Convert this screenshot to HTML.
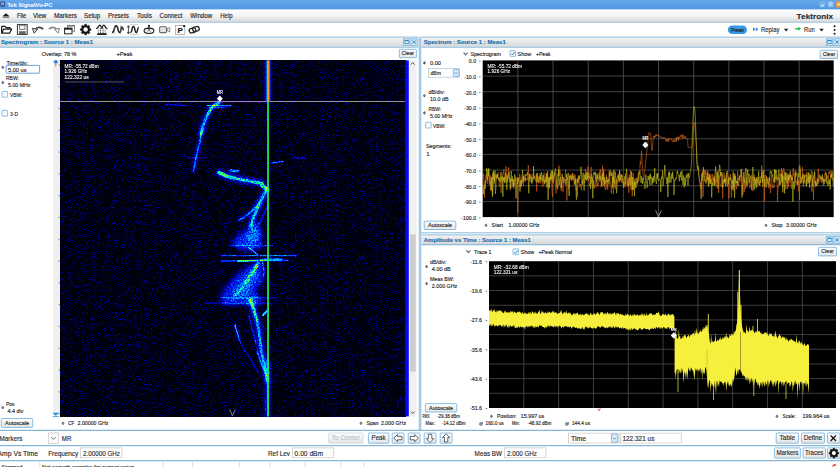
<!DOCTYPE html>
<html><head><meta charset="utf-8"><title>Tek SignalVu-PC</title>
<style>html,body{margin:0;padding:0;background:#fff;overflow:hidden}svg{display:block;font-family:"Liberation Sans",sans-serif}</style></head>
<body>
<svg width="840" height="467" viewBox="0 0 840 467">

<defs>
<linearGradient id="gTitle" x1="0" y1="0" x2="0" y2="1"><stop offset="0" stop-color="#66a8ea"/><stop offset="1" stop-color="#4f96e0"/></linearGradient>
<linearGradient id="gMenu" x1="0" y1="0" x2="0" y2="1"><stop offset="0" stop-color="#ffffff"/><stop offset="0.5" stop-color="#f4f4f4"/><stop offset="1" stop-color="#d9d9d9"/></linearGradient>
<linearGradient id="gPanel" x1="0" y1="0" x2="0" y2="1"><stop offset="0" stop-color="#f3f3f3"/><stop offset="1" stop-color="#d6d8da"/></linearGradient>
<linearGradient id="gHot" x1="0" y1="0" x2="1" y2="0"><stop offset="0" stop-color="#0030ff" stop-opacity="0"/><stop offset="0.25" stop-color="#00a0ff" stop-opacity="0.55"/><stop offset="0.37" stop-color="#30f070" stop-opacity="0.95"/><stop offset="0.45" stop-color="#f59a10"/><stop offset="0.57" stop-color="#f59a10"/><stop offset="0.66" stop-color="#30f070" stop-opacity="0.95"/><stop offset="0.78" stop-color="#00a0ff" stop-opacity="0.5"/><stop offset="1" stop-color="#0030ff" stop-opacity="0"/></linearGradient>
<linearGradient id="gBtn" x1="0" y1="0" x2="0" y2="1"><stop offset="0" stop-color="#ffffff"/><stop offset="1" stop-color="#e4e4e4"/></linearGradient>
<filter id="sg" filterUnits="userSpaceOnUse" x="60" y="60.4" width="345.3" height="356.1" color-interpolation-filters="sRGB">
<feTurbulence type="fractalNoise" baseFrequency="1.37 1.43" numOctaves="1" seed="3" result="n"/>
<feColorMatrix in="n" type="matrix" values="0.8 0 0 0 -0.44  0.8 0 0 0 -0.44  0.8 0 0 0 -0.44  0 0 0 0 1" result="ng"/>
<feTurbulence type="fractalNoise" baseFrequency="0.6" numOctaves="1" seed="12" result="n2"/>
<feColorMatrix in="n2" type="matrix" values="0 1 0 0 0  0 1 0 0 0  0 1 0 0 0  0 0 0 0 1" result="n2g"/>
<feComposite in="SourceGraphic" in2="n2g" operator="arithmetic" k1="1.6" k2="0.1" k3="0" k4="0" result="fg"/>
<feComposite in="fg" in2="ng" operator="arithmetic" k1="0" k2="1" k3="1" k4="0" result="sum"/>
<feGaussianBlur in="sum" stdDeviation="0.55" result="sb"/>
<feComponentTransfer in="sb">
<feFuncR type="table" tableValues="0 0 0 0 0 0.35 1 1 1"/>
<feFuncG type="table" tableValues="0 0 0.12 0.62 1 1 1 0.45 0"/>
<feFuncB type="table" tableValues="0.03 0.6 1 1 0.75 0.2 0 0 0"/>
<feFuncA type="identity"/>
</feComponentTransfer>
</filter>
<filter id="b1" filterUnits="userSpaceOnUse" x="60" y="60" width="346" height="357"><feGaussianBlur stdDeviation="0.6"/></filter>
<filter id="b2" filterUnits="userSpaceOnUse" x="60" y="60" width="346" height="357"><feGaussianBlur stdDeviation="1.5"/></filter>
<filter id="b2m" filterUnits="userSpaceOnUse" x="60" y="60" width="346" height="357"><feGaussianBlur stdDeviation="2.2"/></filter>
<filter id="b3" filterUnits="userSpaceOnUse" x="60" y="60" width="346" height="357"><feGaussianBlur stdDeviation="3"/></filter>
<filter id="b4" filterUnits="userSpaceOnUse" x="0" y="0" width="420" height="467"><feGaussianBlur stdDeviation="30"/></filter>
<filter id="soft"><feGaussianBlur stdDeviation="0.35"/></filter>
</defs>
<rect x="0" y="0" width="840" height="467" fill="#ffffff" />
<rect x="0" y="0" width="840" height="9.5" fill="url(#gTitle)" />
<text x="7.5" y="6.8" font-size="6.0" fill="#ffffff" stroke="#ffffff" stroke-width="0.13" font-weight="bold" textLength="45" lengthAdjust="spacingAndGlyphs" opacity="0.9" >Tek SignalVu-PC</text>
<rect x="0.3" y="1.4" width="4.8" height="5.4" fill="#2f4f8a" rx="0.8"/>
<rect x="1.2" y="2.3" width="3" height="3" fill="#7fa3d4" />
<rect x="819.3" y="1.3" width="6.2" height="6.3" fill="#79b2ec" rx="1.3"/>
<rect x="827.5" y="1.3" width="6.2" height="6.3" fill="#79b2ec" rx="1.3"/>
<rect x="836" y="1.3" width="5" height="6.3" fill="#f29a3c" rx="1.3"/>
<rect x="821" y="5" width="2.8" height="1.2" fill="#e8f2fc" />
<rect x="829.6" y="2.8" width="2.4" height="2.4" fill="none" stroke="#e8f2fc" stroke-width="0.7"/>
<rect x="837.6" y="3.6" width="2.6" height="1.6" fill="#fde8d0" />
<rect x="0" y="9.5" width="840" height="12.5" fill="url(#gMenu)" />
<line x1="0" y1="9.6" x2="840" y2="9.6" stroke="#b5d3f2" stroke-width="0.7" />
<line x1="0" y1="22.3" x2="840" y2="22.3" stroke="#9cc3e6" stroke-width="1" />
<path d="M2.8 15.9 L6 13.2 L9.2 15.9 Z M2.8 16.5 H9.2 V17.6 H2.8 Z" fill="#1c1c1c"/>
<text x="17" y="18.4" font-size="6.4" fill="#222" stroke="#222" stroke-width="0.13" textLength="9.3" lengthAdjust="spacingAndGlyphs" >File</text>
<text x="33" y="18.4" font-size="6.4" fill="#222" stroke="#222" stroke-width="0.13" textLength="13.3" lengthAdjust="spacingAndGlyphs" >View</text>
<text x="54" y="18.4" font-size="6.4" fill="#222" stroke="#222" stroke-width="0.13" textLength="23" lengthAdjust="spacingAndGlyphs" >Markers</text>
<text x="84" y="18.4" font-size="6.4" fill="#222" stroke="#222" stroke-width="0.13" textLength="16.3" lengthAdjust="spacingAndGlyphs" >Setup</text>
<text x="108" y="18.4" font-size="6.4" fill="#222" stroke="#222" stroke-width="0.13" textLength="20.8" lengthAdjust="spacingAndGlyphs" >Presets</text>
<text x="137" y="18.4" font-size="6.4" fill="#222" stroke="#222" stroke-width="0.13" textLength="14.8" lengthAdjust="spacingAndGlyphs" >Tools</text>
<text x="159.6" y="18.4" font-size="6.4" fill="#222" stroke="#222" stroke-width="0.13" textLength="23.0" lengthAdjust="spacingAndGlyphs" >Connect</text>
<text x="190.2" y="18.4" font-size="6.4" fill="#222" stroke="#222" stroke-width="0.13" textLength="22.0" lengthAdjust="spacingAndGlyphs" >Window</text>
<text x="220.3" y="18.4" font-size="6.4" fill="#222" stroke="#222" stroke-width="0.13" textLength="12.3" lengthAdjust="spacingAndGlyphs" >Help</text>
<text x="796.6" y="18.5" font-size="7.7" fill="#2a2a33" stroke="#2a2a33" stroke-width="0.13" font-weight="bold" textLength="36.6" lengthAdjust="spacingAndGlyphs" >Tektronix</text>
<path d="M808.4 18.4 l1.5 -3.6" stroke="#20b8d0" stroke-width="1" fill="none"/>
<rect x="0" y="23" width="840" height="13" fill="#ffffff" />
<path d="M1.6 33.2 V26.4 H5 L6.2 27.6 H10 V29.2 M1.6 33.2 L3.6 29.2 H11.6 L9.6 33.2 Z" fill="#fff" stroke="#1c1c1c" stroke-width="1.2" stroke-linejoin="round"/>
<rect x="17.4" y="24.6" width="9.8" height="9.8" fill="#fff" stroke="#333" stroke-width="1"/>
<rect x="19.6" y="25.2" width="5.4" height="4.2" fill="#f2f2f2" stroke="#555" stroke-width="0.7"/>
<rect x="19.4" y="31.6" width="5.8" height="2.6" fill="#666" stroke="#444" stroke-width="0.5"/>
<path d="M34.5 31 C35.5 27.2 40.5 26 43.2 29.2" fill="none" stroke="#444" stroke-width="1.6"/>
<path d="M32.4 28.3 L37.6 29.3 L34.1 33.2 Z" fill="#ddd" stroke="#444" stroke-width="1" stroke-linejoin="round"/>
<path d="M57.6 31 C56.6 27.2 51.6 26 48.9 29.2" fill="none" stroke="#8a8a8a" stroke-width="1.6"/>
<path d="M59.7 28.3 L54.5 29.3 L58 33.2 Z" fill="#eee" stroke="#8a8a8a" stroke-width="1" stroke-linejoin="round"/>
<rect x="67.6" y="25.4" width="7" height="5.8" fill="#fff" stroke="#777" stroke-width="0.9"/><rect x="67.6" y="25.2" width="7" height="1.4" fill="#777"/>
<rect x="64.6" y="28.2" width="7.4" height="5.6" fill="#fff" stroke="#222" stroke-width="1"/><rect x="64.4" y="27.9" width="7.8" height="1.8" fill="#222"/>
<path d="M90.83 28.73 L90.83 30.47 L89.72 30.59 L89.22 31.82 L89.91 32.68 L88.68 33.91 L87.82 33.22 L86.59 33.72 L86.47 34.83 L84.73 34.83 L84.61 33.72 L83.38 33.22 L82.52 33.91 L81.29 32.68 L81.98 31.82 L81.48 30.59 L80.37 30.47 L80.37 28.73 L81.48 28.61 L81.98 27.38 L81.29 26.52 L82.52 25.29 L83.38 25.98 L84.61 25.48 L84.73 24.37 L86.47 24.37 L86.59 25.48 L87.82 25.98 L88.68 25.29 L89.91 26.52 L89.22 27.38 L89.72 28.61 Z" fill="#111" stroke="#111" stroke-width="0.5" stroke-linejoin="round"/><circle cx="85.6" cy="29.6" r="2.23" fill="#fff"/>
<path d="M96.2 28.6 C97.6 28.6 98 27.6 98.6 26.4 C99.2 25.2 99.8 24.8 100.4 25.4 C101.2 26.2 101.2 28.2 101.8 28.2 C102.4 28.2 102.4 26.2 103.2 25.4 C103.8 24.8 104.4 25.2 105 26.4 C105.6 27.6 106 28.6 107.4 28.6" fill="none" stroke="#1c1c1c" stroke-width="1.25"/>
<path d="M100.4 28.2 V33 M103 28.2 V33" stroke="#333" stroke-width="0.9" stroke-dasharray="1.3 0.5"/><path d="M98.4 29.4 V33 M105.2 29.4 V33" stroke="#666" stroke-width="0.6"/>
<rect x="97.2" y="33.2" width="9.4" height="1.8" fill="#1c1c1c"/>
<path d="M112 32.4 C114.6 32.6 114 25.8 116.2 25.8 C118.2 25.8 117.8 32.6 119.6 32.6 C121.2 32.6 120.6 27 122 27 C123 27 123 29 123.4 30.2" fill="none" stroke="#1c1c1c" stroke-width="1.5"/>
<path d="M114.3 25 V34.4 M120.7 25 V34.4" stroke="#777" stroke-width="0.5"/>
<path d="M130 24.8 H138.4 M130 34.4 H138.4" stroke="#999" stroke-width="0.5"/>
<path d="M128.4 26 V33.4 M127.3 27.4 L128.4 25.6 L129.5 27.4 M127.3 32 L128.4 33.8 L129.5 32" fill="none" stroke="#1c1c1c" stroke-width="0.8"/>
<path d="M130.4 32.6 C132.4 32.6 131.6 26.6 133.4 26.6 C135.2 26.6 134.6 32.6 136.2 32.6 C137.8 32.6 137.2 27.4 138.8 27.6" fill="none" stroke="#1c1c1c" stroke-width="1.45"/>
<ellipse cx="149" cy="30.8" rx="4.9" ry="2.7" fill="#fff" stroke="#1c1c1c" stroke-width="1.1"/>
<ellipse cx="149" cy="31" rx="2.2" ry="1" fill="none" stroke="#777" stroke-width="0.5"/>
<path d="M149 26 V30.4" stroke="#1c1c1c" stroke-width="1.1"/><circle cx="149" cy="25.8" r="1.1" fill="#1c1c1c"/>
<rect x="159.6" y="26.8" width="6.9" height="5.8" rx="1" fill="#e6e6e6" stroke="#6a6a6a" stroke-width="1.1"/>
<path d="M167.2 28.8 L169.8 27.4 V32 L167.2 30.6 Z" fill="#f4f4f4" stroke="#777" stroke-width="0.8" stroke-linejoin="round"/>
<rect x="175.6" y="25.5" width="9.2" height="8.9" fill="#fff" stroke="#999" stroke-width="0.7"/>
<text x="177.6" y="33.3" font-size="8" fill="#111" stroke="#111" stroke-width="0.13" font-weight="bold" >P</text>
<circle cx="184.1" cy="26.1" r="1.15" fill="#111"/>
<rect x="189.2" y="28.2" width="6.6" height="4.4" rx="2" fill="none" stroke="#2a2a2a" stroke-width="1.35" transform="rotate(-14 192.5 30.4)"/>
<rect x="192.6" y="26.8" width="6.6" height="4.4" rx="2" fill="none" stroke="#2a2a2a" stroke-width="1.35" transform="rotate(-14 195.9 29)"/>
<rect x="727.8" y="25.4" width="19.2" height="8.6" rx="4.3" fill="#3d97de"/>
<text x="731" y="31.7" font-size="5.36" fill="#0c1824" stroke="#0c1824" stroke-width="0.13" textLength="12.8" lengthAdjust="spacingAndGlyphs" >Preset</text>
<path d="M753 27.2 l2.4 2 l-2.4 2 z M755.8 27.2 l2.6 2 l-2.6 2 z" fill="#2f8fe0"/>
<text x="761" y="31.7" font-size="7.27" fill="#2a2a2a" stroke="#2a2a2a" stroke-width="0.13" textLength="18.4" lengthAdjust="spacingAndGlyphs" >Replay</text>
<path d="M783.8 28.8 h4.6 l-2.3 2.6 z" fill="#222"/>
<path d="M795.2 28.1 h3.2 v-1.3 l2.6 2 l-2.6 2 v-1.3 h-3.2 z" fill="#22c040"/>
<text x="804" y="31.7" font-size="7.27" fill="#2a2a2a" stroke="#2a2a2a" stroke-width="0.13" textLength="10.6" lengthAdjust="spacingAndGlyphs" >Run</text>
<path d="M819.2 28.8 h4.6 l-2.3 2.6 z" fill="#222"/>
<circle cx="834.6" cy="26.3" r="1.05" fill="#1a1a1a"/><circle cx="834.6" cy="30" r="1.05" fill="#1a1a1a"/><circle cx="834.6" cy="33.7" r="1.05" fill="#1a1a1a"/>
<rect x="0" y="37.5" width="418.6" height="9.299999999999997" fill="url(#gPanel)" />
<line x1="0" y1="37.1" x2="418.6" y2="37.1" stroke="#8ebbdc" stroke-width="1.0" />
<line x1="0" y1="47.199999999999996" x2="418.6" y2="47.199999999999996" stroke="#8ebbdc" stroke-width="1.1" />
<text x="1" y="44.1" font-size="6.0" fill="#1270ae" stroke="#1270ae" stroke-width="0.13" font-weight="bold" textLength="92" lengthAdjust="spacingAndGlyphs" >Spectrogram : Source 1 : Meas1</text>
<rect x="403.4" y="38.800000000000004" width="6.4" height="6.6" fill="#cfe6f7" stroke="#6fb0dd" stroke-width="0.7"/>
<rect x="405.0" y="40.400000000000006" width="3.2" height="3.2" fill="#ffffff" stroke="#2f86c4" stroke-width="0.8"/>
<line x1="404.79999999999995" y1="40.6" x2="408.4" y2="40.6" stroke="#2f86c4" stroke-width="1.2" />
<rect x="411.0" y="38.800000000000004" width="6.4" height="6.6" fill="#cfe6f7" stroke="#6fb0dd" stroke-width="0.7"/>
<path d="M412.7 40.5 l3 3.2 M415.7 40.5 l-3 3.2" stroke="#2f86c4" stroke-width="1" fill="none"/>
<rect x="421.4" y="37.5" width="418.6" height="9.299999999999997" fill="url(#gPanel)" />
<line x1="421.4" y1="37.1" x2="840" y2="37.1" stroke="#8ebbdc" stroke-width="1.0" />
<line x1="421.4" y1="47.199999999999996" x2="840" y2="47.199999999999996" stroke="#8ebbdc" stroke-width="1.1" />
<text x="423.79999999999995" y="44.1" font-size="6.0" fill="#1270ae" stroke="#1270ae" stroke-width="0.13" font-weight="bold" textLength="82" lengthAdjust="spacingAndGlyphs" >Spectrum : Source 1 : Meas1</text>
<rect x="826.3" y="38.800000000000004" width="6.4" height="6.6" fill="#cfe6f7" stroke="#6fb0dd" stroke-width="0.7"/>
<rect x="827.9" y="40.400000000000006" width="3.2" height="3.2" fill="#ffffff" stroke="#2f86c4" stroke-width="0.8"/>
<line x1="827.6999999999999" y1="40.6" x2="831.3" y2="40.6" stroke="#2f86c4" stroke-width="1.2" />
<rect x="833.9" y="38.800000000000004" width="6.4" height="6.6" fill="#cfe6f7" stroke="#6fb0dd" stroke-width="0.7"/>
<path d="M835.5999999999999 40.5 l3 3.2 M838.5999999999999 40.5 l-3 3.2" stroke="#2f86c4" stroke-width="1" fill="none"/>
<rect x="421.4" y="235.3" width="418.6" height="8.899999999999977" fill="url(#gPanel)" />
<line x1="421.4" y1="234.9" x2="840" y2="234.9" stroke="#8ebbdc" stroke-width="1.0" />
<line x1="421.4" y1="244.6" x2="840" y2="244.6" stroke="#8ebbdc" stroke-width="1.1" />
<text x="423.79999999999995" y="241.7" font-size="6.0" fill="#1270ae" stroke="#1270ae" stroke-width="0.13" font-weight="bold" textLength="107" lengthAdjust="spacingAndGlyphs" >Amplitude vs Time : Source 1 : Meas1</text>
<rect x="826.3" y="236.6" width="6.4" height="6.6" fill="#cfe6f7" stroke="#6fb0dd" stroke-width="0.7"/>
<rect x="827.9" y="238.2" width="3.2" height="3.2" fill="#ffffff" stroke="#2f86c4" stroke-width="0.8"/>
<line x1="827.6999999999999" y1="238.4" x2="831.3" y2="238.4" stroke="#2f86c4" stroke-width="1.2" />
<rect x="833.9" y="236.6" width="6.4" height="6.6" fill="#cfe6f7" stroke="#6fb0dd" stroke-width="0.7"/>
<path d="M835.5999999999999 238.3 l3 3.2 M838.5999999999999 238.3 l-3 3.2" stroke="#2f86c4" stroke-width="1" fill="none"/>
<rect x="418.6" y="37" width="2.8" height="393.5" fill="#b9d5ea" />
<rect x="419.7" y="37" width="0.9" height="393.5" fill="#8ebbdc" />
<line x1="421.4" y1="232.8" x2="840" y2="232.8" stroke="#8ebbdc" stroke-width="1.0" />
<text x="41.8" y="55.6" font-size="5.45" fill="#1e1e1e" stroke="#1e1e1e" stroke-width="0.13" textLength="34.5" lengthAdjust="spacingAndGlyphs" >Overlap: 78 %</text>
<text x="116.5" y="55.6" font-size="5.19" fill="#1e1e1e" stroke="#1e1e1e" stroke-width="0.13" textLength="16" lengthAdjust="spacingAndGlyphs" >+Peak</text>
<rect x="399.3" y="49.3" width="17.1" height="8.4" fill="url(#gBtn)" stroke="#6faedb" stroke-width="0.8" rx="0.8"/>
<text x="407.85" y="55.376" font-size="5.36" fill="#1e1e1e" stroke="#1e1e1e" stroke-width="0.13" text-anchor="middle" textLength="12.5" lengthAdjust="spacingAndGlyphs">Clear</text>
<text x="6.5" y="64.6" font-size="5.45" fill="#1e1e1e" stroke="#1e1e1e" stroke-width="0.13" textLength="21.5" lengthAdjust="spacingAndGlyphs" >Time/div:</text>
<rect x="6.2" y="65.4" width="33.4" height="7.8" fill="#ffffff" stroke="#5b9bd5" stroke-width="0.9" rx="0.5"/>
<text x="8" y="71.7" font-size="5.45" fill="#1e1e1e" stroke="#1e1e1e" stroke-width="0.13" textLength="18.5" lengthAdjust="spacingAndGlyphs" >5.00 us</text>
<path d="M1.1 67.4 L2.8 65.4 L4.5 67.4 Z" fill="#6b6478"/><path d="M1.3 67.5 H4.3 L2.8 69.0 Z" fill="#4a4a52"/>
<text x="6" y="80" font-size="5.45" fill="#1e1e1e" stroke="#1e1e1e" stroke-width="0.13" textLength="13" lengthAdjust="spacingAndGlyphs" >RBW:</text>
<text x="8" y="87.4" font-size="5.45" fill="#1e1e1e" stroke="#1e1e1e" stroke-width="0.13" textLength="22.5" lengthAdjust="spacingAndGlyphs" >5.00 MHz</text>
<path d="M1.1 82.7 L2.8 80.7 L4.5 82.7 Z" fill="#6b6478"/><path d="M1.3 82.8 H4.3 L2.8 84.3 Z" fill="#4a4a52"/>
<rect x="2" y="91.4" width="5.6" height="5.8" fill="#f4f9fd" stroke="#6faedb" stroke-width="0.8" rx="0.6"/>
<text x="10" y="96.7" font-size="5.45" fill="#1e1e1e" stroke="#1e1e1e" stroke-width="0.13" textLength="12.5" lengthAdjust="spacingAndGlyphs" >VBW:</text>
<rect x="2" y="110.4" width="5.6" height="5.8" fill="#f4f9fd" stroke="#6faedb" stroke-width="0.8" rx="0.6"/>
<text x="10" y="115.7" font-size="5.45" fill="#1e1e1e" stroke="#1e1e1e" stroke-width="0.13" textLength="8" lengthAdjust="spacingAndGlyphs" >3-D</text>
<text x="6" y="406.4" font-size="5.45" fill="#1e1e1e" stroke="#1e1e1e" stroke-width="0.13" textLength="8.5" lengthAdjust="spacingAndGlyphs" >Pos</text>
<text x="7.5" y="413.2" font-size="5.45" fill="#1e1e1e" stroke="#1e1e1e" stroke-width="0.13" textLength="16" lengthAdjust="spacingAndGlyphs" >4.4 div</text>
<path d="M1.1 407.7 L2.8 405.7 L4.5 407.7 Z" fill="#6b6478"/><path d="M1.3 407.8 H4.3 L2.8 409.3 Z" fill="#4a4a52"/>
<rect x="1.3" y="418.5" width="31.4" height="8.9" fill="url(#gBtn)" stroke="#6faedb" stroke-width="0.8" rx="0.8"/>
<text x="17.0" y="424.82599999999996" font-size="5.36" fill="#1e1e1e" stroke="#1e1e1e" stroke-width="0.13" text-anchor="middle" textLength="24" lengthAdjust="spacingAndGlyphs">Autoscale</text>
<path d="M61.3 423.4 L63 421.4 L64.7 423.4 Z" fill="#6b6478"/><path d="M61.5 423.5 H64.5 L63 425.0 Z" fill="#4a4a52"/>
<text x="68" y="425" font-size="5.28" fill="#1e1e1e" stroke="#1e1e1e" stroke-width="0.13" textLength="6.5" lengthAdjust="spacingAndGlyphs" >CF</text>
<text x="77.5" y="425" font-size="5.28" fill="#1e1e1e" stroke="#1e1e1e" stroke-width="0.13" textLength="31" lengthAdjust="spacingAndGlyphs" >2.00000 GHz</text>
<path d="M359.3 423.4 L361 421.4 L362.7 423.4 Z" fill="#6b6478"/><path d="M359.5 423.5 H362.5 L361 425.0 Z" fill="#4a4a52"/>
<text x="366.5" y="425" font-size="5.28" fill="#1e1e1e" stroke="#1e1e1e" stroke-width="0.13" textLength="12" lengthAdjust="spacingAndGlyphs" >Span</text>
<text x="381" y="425" font-size="5.28" fill="#1e1e1e" stroke="#1e1e1e" stroke-width="0.13" textLength="25" lengthAdjust="spacingAndGlyphs" >2.000 GHz</text>
<rect x="53" y="60" width="7" height="356.5" fill="#efefef" />
<line x1="58.6" y1="64.9" x2="60" y2="64.9" stroke="#555" stroke-width="0.7" />
<line x1="58.6" y1="86.7" x2="60" y2="86.7" stroke="#555" stroke-width="0.7" />
<line x1="58.6" y1="108.5" x2="60" y2="108.5" stroke="#555" stroke-width="0.7" />
<line x1="58.6" y1="130.3" x2="60" y2="130.3" stroke="#555" stroke-width="0.7" />
<line x1="58.6" y1="152.10000000000002" x2="60" y2="152.10000000000002" stroke="#555" stroke-width="0.7" />
<line x1="58.6" y1="173.9" x2="60" y2="173.9" stroke="#555" stroke-width="0.7" />
<line x1="58.6" y1="195.70000000000002" x2="60" y2="195.70000000000002" stroke="#555" stroke-width="0.7" />
<line x1="58.6" y1="217.5" x2="60" y2="217.5" stroke="#555" stroke-width="0.7" />
<line x1="58.6" y1="239.3" x2="60" y2="239.3" stroke="#555" stroke-width="0.7" />
<line x1="58.6" y1="261.1" x2="60" y2="261.1" stroke="#555" stroke-width="0.7" />
<line x1="58.6" y1="282.9" x2="60" y2="282.9" stroke="#555" stroke-width="0.7" />
<line x1="58.6" y1="304.70000000000005" x2="60" y2="304.70000000000005" stroke="#555" stroke-width="0.7" />
<line x1="58.6" y1="326.5" x2="60" y2="326.5" stroke="#555" stroke-width="0.7" />
<line x1="58.6" y1="348.30000000000007" x2="60" y2="348.30000000000007" stroke="#555" stroke-width="0.7" />
<line x1="58.6" y1="370.1" x2="60" y2="370.1" stroke="#555" stroke-width="0.7" />
<line x1="58.6" y1="391.9" x2="60" y2="391.9" stroke="#555" stroke-width="0.7" />
<line x1="58.6" y1="413.70000000000005" x2="60" y2="413.70000000000005" stroke="#555" stroke-width="0.7" />
<path d="M53.2 61.4 h5.2 l-1.3 1.9 h-2.6 z M54.4 60.2 h2.8 v1.3 h-2.8 z" fill="#2a7de1"/><path d="M55.8 63 v3.4" stroke="#d33" stroke-width="0.8"/>
<path d="M52.4 412.7 h6.6 l-3.3 3.1 z M52.8 416.1 h5.8 v0.7 h-5.8 z" fill="#1e8cf5"/>
<g filter="url(#sg)"><rect x="60" y="60.4" width="345.3" height="356.1" fill="#000"/><polyline points="219,102.5 214,105.5 210,110.5 206,118 203,126 201,134" fill="none" stroke="#fff" stroke-width="6" stroke-linecap="round" stroke-linejoin="round" opacity="0.2" filter="url(#b2)"/>
<polyline points="201.5,132 200,140 198,149 196,158 194.5,165 193.5,171" fill="none" stroke="#fff" stroke-width="4" stroke-linecap="round" stroke-linejoin="round" opacity="0.16" filter="url(#b2)"/>
<polyline points="219,102.5 214,105.5 210,110.5 206,118 203,126 201,134" fill="none" stroke="#fff" stroke-width="2.8" stroke-linecap="round" stroke-linejoin="round" opacity="0.25" filter="url(#b1)"/>
<polyline points="201.5,132 200,140 198,149 196,158 194.5,165 193.5,171" fill="none" stroke="#fff" stroke-width="1.5" stroke-linecap="round" stroke-linejoin="round" opacity="0.26" filter="url(#b1)"/>
<polyline points="219.5,103 214,105.2 211,108.5 208,114" fill="none" stroke="#fff" stroke-width="2.4" stroke-linecap="round" stroke-linejoin="round" opacity="0.14" filter="url(#b1)"/>
<polyline points="207,105.5 231,105.8" fill="none" stroke="#fff" stroke-width="1.2" stroke-linecap="round" stroke-linejoin="round" opacity="0.42" filter="url(#b1)"/>
<polyline points="209,107.7 226,107.8" fill="none" stroke="#fff" stroke-width="1.0" stroke-linecap="round" stroke-linejoin="round" opacity="0.3" filter="url(#b1)"/>
<polyline points="165,104.3 187,105.6" fill="none" stroke="#fff" stroke-width="1.4" stroke-linecap="round" stroke-linejoin="round" opacity="0.2" filter="url(#b1)"/>
<polyline points="186,158 208,157.7" fill="none" stroke="#fff" stroke-width="1.2" stroke-linecap="round" stroke-linejoin="round" opacity="0.13" filter="url(#b1)"/>
<polyline points="271,162.9 283,161.6" fill="none" stroke="#fff" stroke-width="1.3" stroke-linecap="round" stroke-linejoin="round" opacity="0.36" filter="url(#b1)"/>
<polyline points="294,157.4 306,158.4" fill="none" stroke="#fff" stroke-width="1.3" stroke-linecap="round" stroke-linejoin="round" opacity="0.22" filter="url(#b1)"/>
<polyline points="219,172.5 226,176 240,179.5 255,182 262,183.5" fill="none" stroke="#fff" stroke-width="7" stroke-linecap="round" stroke-linejoin="round" opacity="0.2" filter="url(#b2)"/>
<polyline points="219,172.5 226,176 240,179.5 255,182 262,183.5" fill="none" stroke="#fff" stroke-width="3.2" stroke-linecap="round" stroke-linejoin="round" opacity="0.34" filter="url(#b1)"/>
<polyline points="219,172.5 227,176" fill="none" stroke="#fff" stroke-width="3.4" stroke-linecap="round" stroke-linejoin="round" opacity="0.28" filter="url(#b1)"/>
<polyline points="230.5,170.4 238,171.4" fill="none" stroke="#fff" stroke-width="2.6" stroke-linecap="round" stroke-linejoin="round" opacity="0.4" filter="url(#b1)"/>
<polyline points="262,185.5 268,190" fill="none" stroke="#fff" stroke-width="3.6" stroke-linecap="round" stroke-linejoin="round" opacity="0.45" filter="url(#b1)"/>
<polyline points="265.5,187 268,189.5" fill="none" stroke="#fff" stroke-width="2.2" stroke-linecap="round" stroke-linejoin="round" opacity="0.4" filter="url(#b1)"/>
<polyline points="266,191 262,198 258,207 254,216 251,226" fill="none" stroke="#fff" stroke-width="7" stroke-linecap="round" stroke-linejoin="round" opacity="0.2" filter="url(#b2)"/>
<polyline points="266,191 262,198 258,207 254,216 251,226" fill="none" stroke="#fff" stroke-width="2.8" stroke-linecap="round" stroke-linejoin="round" opacity="0.3" filter="url(#b1)"/>
<polyline points="260,203 252,211 243,218 239,220" fill="none" stroke="#fff" stroke-width="4" stroke-linecap="round" stroke-linejoin="round" opacity="0.14" filter="url(#b2)"/>
<polyline points="260,203 252,211 243,218 239,220" fill="none" stroke="#fff" stroke-width="1.6" stroke-linecap="round" stroke-linejoin="round" opacity="0.24" filter="url(#b1)"/>
<polyline points="268,205 264,214 259,224" fill="none" stroke="#fff" stroke-width="2.0" stroke-linecap="round" stroke-linejoin="round" opacity="0.2" filter="url(#b1)"/>
<polygon points="258,221 262,232 262,248 250,251 238,249 231,243 239,234 251,226" fill="#fff" opacity="0.24" filter="url(#b2m)"/>
<polygon points="255,226 259,232 256,243 247,244 246,236" fill="#fff" opacity="0.14" filter="url(#b2)"/>
<polygon points="252,263 263,262 263,282 255,290 262,299 262,305 223,305 220,298 227,285 239,273" fill="#fff" opacity="0.23" filter="url(#b2m)"/>
<polygon points="250,270 258,272 252,286 246,296 232,300 234,290 242,280" fill="#fff" opacity="0.13" filter="url(#b2)"/>
<polyline points="230,245.7 272.5,245.7" fill="none" stroke="#fff" stroke-width="0.9" stroke-linecap="round" stroke-linejoin="round" opacity="0.28" filter="url(#b1)"/>
<polyline points="221,255.6 297,255.6" fill="none" stroke="#fff" stroke-width="1.1" stroke-linecap="round" stroke-linejoin="round" opacity="0.28" filter="url(#b1)"/>
<polyline points="248,255.6 287,255.6" fill="none" stroke="#fff" stroke-width="0.9" stroke-linecap="round" stroke-linejoin="round" opacity="0.18" filter="url(#b1)"/>
<polyline points="221,261 288,260.5" fill="none" stroke="#fff" stroke-width="1.3" stroke-linecap="round" stroke-linejoin="round" opacity="0.34" filter="url(#b1)"/>
<polyline points="238,261.3 282,259" fill="none" stroke="#fff" stroke-width="1.9" stroke-linecap="round" stroke-linejoin="round" opacity="0.4" filter="url(#b1)"/>
<polyline points="243,261 250,260.6" fill="none" stroke="#fff" stroke-width="1.4" stroke-linecap="round" stroke-linejoin="round" opacity="0.2" filter="url(#b1)"/>
<polyline points="262,258.8 272,258" fill="none" stroke="#fff" stroke-width="1.2" stroke-linecap="round" stroke-linejoin="round" opacity="0.22" filter="url(#b1)"/>
<polyline points="248.8,247.4 253,251 257.3,254.5" fill="none" stroke="#fff" stroke-width="1.4" stroke-linecap="round" stroke-linejoin="round" opacity="0.4" filter="url(#b1)"/>
<polyline points="258,263 255,268 251,275 246,282" fill="none" stroke="#fff" stroke-width="3.4" stroke-linecap="round" stroke-linejoin="round" opacity="0.25" filter="url(#b1)"/>
<polyline points="257.5,264 254.5,270 252,274.5" fill="none" stroke="#fff" stroke-width="2.4" stroke-linecap="round" stroke-linejoin="round" opacity="0.3" filter="url(#b1)"/>
<polyline points="257.2,265.8 255.6,268.2" fill="none" stroke="#fff" stroke-width="2.4" stroke-linecap="round" stroke-linejoin="round" opacity="0.5" filter="url(#b1)"/>
<polyline points="262.6,262 264,270 263.6,276.5" fill="none" stroke="#fff" stroke-width="1.1" stroke-linecap="round" stroke-linejoin="round" opacity="0.4" filter="url(#b1)"/>
<polyline points="246,283 241,289 236,295" fill="none" stroke="#fff" stroke-width="2.6" stroke-linecap="round" stroke-linejoin="round" opacity="0.2" filter="url(#b1)"/>
<polyline points="220,297.7 276,297.7" fill="none" stroke="#fff" stroke-width="0.9" stroke-linecap="round" stroke-linejoin="round" opacity="0.26" filter="url(#b1)"/>
<polyline points="205,303.2 271,303.2" fill="none" stroke="#fff" stroke-width="0.9" stroke-linecap="round" stroke-linejoin="round" opacity="0.22" filter="url(#b1)"/>
<polyline points="250,300 253,308 256,318 259,330 260,342 262,355 265,368 267.5,380" fill="none" stroke="#fff" stroke-width="7" stroke-linecap="round" stroke-linejoin="round" opacity="0.2" filter="url(#b2)"/>
<polyline points="250,300 253,308 256,318 259,330 260,342 262,355 265,368 267.5,380" fill="none" stroke="#fff" stroke-width="2.6" stroke-linecap="round" stroke-linejoin="round" opacity="0.26" filter="url(#b1)"/>
<polyline points="251,300 254,309 257,320" fill="none" stroke="#fff" stroke-width="2.6" stroke-linecap="round" stroke-linejoin="round" opacity="0.26" filter="url(#b1)"/>
<polyline points="268,310 263,315" fill="none" stroke="#fff" stroke-width="1.8" stroke-linecap="round" stroke-linejoin="round" opacity="0.5" filter="url(#b1)"/>
<polyline points="235,325 237,332 239,339" fill="none" stroke="#fff" stroke-width="3" stroke-linecap="round" stroke-linejoin="round" opacity="0.12" filter="url(#b2)"/>
<polyline points="235,325 237,332 239,339" fill="none" stroke="#fff" stroke-width="1.2" stroke-linecap="round" stroke-linejoin="round" opacity="0.4" filter="url(#b1)"/>
<polyline points="239,339 244,349 251,360 258,372" fill="none" stroke="#fff" stroke-width="1.6" stroke-linecap="round" stroke-linejoin="round" opacity="0.16" filter="url(#b1)"/>
<polyline points="249,316 252,328 256,344" fill="none" stroke="#fff" stroke-width="1.6" stroke-linecap="round" stroke-linejoin="round" opacity="0.22" filter="url(#b1)"/>
<polyline points="257,352 262,365 267.5,378" fill="none" stroke="#fff" stroke-width="1.6" stroke-linecap="round" stroke-linejoin="round" opacity="0.3" filter="url(#b1)"/>
<polyline points="267.5,362 267.5,416" fill="none" stroke="#fff" stroke-width="5.5" stroke-linecap="round" stroke-linejoin="round" opacity="0.2" filter="url(#b2)"/>
<polyline points="268,60.4 268,101" fill="none" stroke="#fff" stroke-width="4" stroke-linecap="round" stroke-linejoin="round" opacity="0.1" filter="url(#b2)"/>
<rect x="264" y="60" width="8" height="41" fill="#fff" opacity="0.1" filter="url(#b2)"/></g>
<rect x="60" y="101.15" width="345.3" height="0.85" fill="#b0b0b0"/>
<rect x="218" y="101" width="50" height="1.1" fill="#b070d0" opacity="0.6"/>
<rect x="267.2" y="102" width="1.7" height="314.5" fill="#24f05a"/>
<rect x="265" y="60.4" width="6.2" height="40.8" fill="url(#gHot)"/>
<path d="M219.8 95.6 l3 3.1 l-3 3.1 l-3 -3.1 z" fill="#ffffff"/>
<text x="216.8" y="94.4" font-size="4.5" fill="#ffffff" stroke="#ffffff" stroke-width="0.13" textLength="6.2" lengthAdjust="spacingAndGlyphs" opacity="0.99" >MR</text>
<path d="M229.8 409.5 l2.7 6.5 l2.7 -6.5" stroke="#9a9a9a" stroke-width="0.8" fill="none"/>
<rect x="63.6" y="62.6" width="36.4" height="17.6" fill="#000008" opacity="0.85" filter="url(#b1)"/>
<text x="64.6" y="67.8" font-size="5.1" fill="#f4f4f4" stroke="#f4f4f4" stroke-width="0.13" textLength="34" lengthAdjust="spacingAndGlyphs" opacity="0.99" >MR: -55.72 dBm</text>
<text x="64.6" y="73.2" font-size="5.1" fill="#f4f4f4" stroke="#f4f4f4" stroke-width="0.13" textLength="22.5" lengthAdjust="spacingAndGlyphs" opacity="0.99" >1.926 GHz</text>
<text x="64.6" y="78.7" font-size="5.1" fill="#f4f4f4" stroke="#f4f4f4" stroke-width="0.13" textLength="24" lengthAdjust="spacingAndGlyphs" opacity="0.99" >122.322 us</text>
<rect x="65" y="80.9" width="59" height="2" fill="#8088a0" opacity="0.3" filter="url(#b1)"/>
<rect x="405.2" y="60.4" width="3.7" height="356" fill="#0606ff" />
<rect x="408.9" y="60.4" width="7.6" height="356.1" fill="#f0f0f0" />
<rect x="410" y="234.4" width="5.8" height="137.2" fill="#cdcdcd" />
<path d="M410.8 64.6 l1.9 -2 l1.9 2" stroke="#444" stroke-width="0.9" fill="none"/>
<path d="M410.8 411.5 l1.9 2 l1.9 -2" stroke="#444" stroke-width="0.9" fill="none"/>
<rect x="482.7" y="60.4" width="351.00000000000006" height="156.7" fill="#000000" />
<line x1="517.87" y1="60.4" x2="517.87" y2="217.1" stroke="#606060" stroke-width="0.7"/>
<line x1="482.7" y1="76.07" x2="833.7" y2="76.07" stroke="#606060" stroke-width="0.7"/>
<line x1="553.04" y1="60.4" x2="553.04" y2="217.1" stroke="#606060" stroke-width="0.7"/>
<line x1="482.7" y1="91.74" x2="833.7" y2="91.74" stroke="#606060" stroke-width="0.7"/>
<line x1="588.21" y1="60.4" x2="588.21" y2="217.1" stroke="#606060" stroke-width="0.7"/>
<line x1="482.7" y1="107.41" x2="833.7" y2="107.41" stroke="#606060" stroke-width="0.7"/>
<line x1="623.38" y1="60.4" x2="623.38" y2="217.1" stroke="#606060" stroke-width="0.7"/>
<line x1="482.7" y1="123.08" x2="833.7" y2="123.08" stroke="#606060" stroke-width="0.7"/>
<line x1="658.55" y1="60.4" x2="658.55" y2="217.1" stroke="#606060" stroke-width="0.7"/>
<line x1="482.7" y1="138.75" x2="833.7" y2="138.75" stroke="#606060" stroke-width="0.7"/>
<line x1="693.72" y1="60.4" x2="693.72" y2="217.1" stroke="#606060" stroke-width="0.7"/>
<line x1="482.7" y1="154.42" x2="833.7" y2="154.42" stroke="#606060" stroke-width="0.7"/>
<line x1="728.89" y1="60.4" x2="728.89" y2="217.1" stroke="#606060" stroke-width="0.7"/>
<line x1="482.7" y1="170.09" x2="833.7" y2="170.09" stroke="#606060" stroke-width="0.7"/>
<line x1="764.06" y1="60.4" x2="764.06" y2="217.1" stroke="#606060" stroke-width="0.7"/>
<line x1="482.7" y1="185.76" x2="833.7" y2="185.76" stroke="#606060" stroke-width="0.7"/>
<line x1="799.23" y1="60.4" x2="799.23" y2="217.1" stroke="#606060" stroke-width="0.7"/>
<line x1="482.7" y1="201.43" x2="833.7" y2="201.43" stroke="#606060" stroke-width="0.7"/>
<text x="476.2" y="63.4" font-size="5.28" fill="#1e1e1e" stroke="#1e1e1e" stroke-width="0.13" text-anchor="end" >0.0</text>
<line x1="479.1" y1="61.2" x2="480.5" y2="61.2" stroke="#444" stroke-width="0.7"/>
<text x="476.2" y="79.1" font-size="5.28" fill="#1e1e1e" stroke="#1e1e1e" stroke-width="0.13" text-anchor="end" >-10.0</text>
<line x1="479.1" y1="76.9" x2="480.5" y2="76.9" stroke="#444" stroke-width="0.7"/>
<text x="476.2" y="94.7" font-size="5.28" fill="#1e1e1e" stroke="#1e1e1e" stroke-width="0.13" text-anchor="end" >-20.0</text>
<line x1="479.1" y1="92.5" x2="480.5" y2="92.5" stroke="#444" stroke-width="0.7"/>
<text x="476.2" y="110.4" font-size="5.28" fill="#1e1e1e" stroke="#1e1e1e" stroke-width="0.13" text-anchor="end" >-30.0</text>
<line x1="479.1" y1="108.2" x2="480.5" y2="108.2" stroke="#444" stroke-width="0.7"/>
<text x="476.2" y="126.1" font-size="5.28" fill="#1e1e1e" stroke="#1e1e1e" stroke-width="0.13" text-anchor="end" >-40.0</text>
<line x1="479.1" y1="123.9" x2="480.5" y2="123.9" stroke="#444" stroke-width="0.7"/>
<text x="476.2" y="141.8" font-size="5.28" fill="#1e1e1e" stroke="#1e1e1e" stroke-width="0.13" text-anchor="end" >-50.0</text>
<line x1="479.1" y1="139.6" x2="480.5" y2="139.6" stroke="#444" stroke-width="0.7"/>
<text x="476.2" y="157.4" font-size="5.28" fill="#1e1e1e" stroke="#1e1e1e" stroke-width="0.13" text-anchor="end" >-60.0</text>
<line x1="479.1" y1="155.2" x2="480.5" y2="155.2" stroke="#444" stroke-width="0.7"/>
<text x="476.2" y="173.1" font-size="5.28" fill="#1e1e1e" stroke="#1e1e1e" stroke-width="0.13" text-anchor="end" >-70.0</text>
<line x1="479.1" y1="170.9" x2="480.5" y2="170.9" stroke="#444" stroke-width="0.7"/>
<text x="476.2" y="188.8" font-size="5.28" fill="#1e1e1e" stroke="#1e1e1e" stroke-width="0.13" text-anchor="end" >-80.0</text>
<line x1="479.1" y1="186.6" x2="480.5" y2="186.6" stroke="#444" stroke-width="0.7"/>
<text x="476.2" y="204.4" font-size="5.28" fill="#1e1e1e" stroke="#1e1e1e" stroke-width="0.13" text-anchor="end" >-90.0</text>
<line x1="479.1" y1="202.2" x2="480.5" y2="202.2" stroke="#444" stroke-width="0.7"/>
<text x="476.2" y="220.1" font-size="5.28" fill="#1e1e1e" stroke="#1e1e1e" stroke-width="0.13" text-anchor="end" >-100.0</text>
<line x1="479.1" y1="217.9" x2="480.5" y2="217.9" stroke="#444" stroke-width="0.7"/>
<g clip-path="url(#clipS)">
<polyline points="482.7,184.2 483.1,179.6 483.6,173.6 484.0,177.8 484.5,197.8 484.9,183.3 485.3,188.1 485.8,179.3 486.2,174.9 486.6,174.5 487.1,177.5 487.5,183.9 488.0,182.5 488.4,173.0 488.8,174.5 489.3,176.2 489.7,177.4 490.2,182.1 490.6,175.5 491.0,189.8 491.5,176.8 491.9,180.2 492.4,189.0 492.8,194.5 493.2,182.3 493.7,180.4 494.1,175.1 494.5,180.9 495.0,174.3 495.4,174.5 495.9,176.6 496.3,179.2 496.7,177.1 497.2,175.7 497.6,172.9 498.1,172.4 498.5,178.9 498.9,180.3 499.4,187.0 499.8,186.0 500.2,176.8 500.7,183.8 501.1,192.8 501.6,178.7 502.0,182.5 502.4,178.8 502.9,173.3 503.3,174.2 503.8,169.5 504.2,175.6 504.6,179.5 505.1,183.2 505.5,178.9 506.0,166.5 506.4,173.2 506.8,181.6 507.3,177.9 507.7,182.3 508.1,174.5 508.6,167.5 509.0,174.7 509.5,178.2 509.9,189.1 510.3,190.3 510.8,184.7 511.2,181.8 511.7,180.7 512.1,181.5 512.5,179.6 513.0,184.4 513.4,182.6 513.9,188.7 514.3,180.5 514.7,178.8 515.2,180.8 515.6,181.3 516.0,176.8 516.5,178.6 516.9,181.6 517.4,178.0 517.8,212.6 518.2,184.9 518.7,186.7 519.1,183.0 519.6,173.8 520.0,175.2 520.4,179.7 520.9,187.4 521.3,187.1 521.7,179.7 522.2,183.4 522.6,183.4 523.1,176.9 523.5,186.1 523.9,174.6 524.4,176.7 524.8,180.4 525.3,178.7 525.7,178.5 526.1,177.6 526.6,180.1 527.0,179.9 527.5,179.5 527.9,180.1 528.3,165.1 528.8,178.1 529.2,181.3 529.6,177.0 530.1,178.4 530.5,176.8 531.0,174.0 531.4,178.9 531.8,184.1 532.3,181.3 532.7,180.2 533.2,173.6 533.6,177.0 534.0,179.2 534.5,175.9 534.9,177.2 535.4,178.6 535.8,177.6 536.2,174.8 536.7,191.3 537.1,173.1 537.5,182.2 538.0,176.5 538.4,176.3 538.9,183.3 539.3,180.2 539.7,178.6 540.2,175.4 540.6,183.4 541.1,182.7 541.5,181.7 541.9,177.3 542.4,180.7 542.8,186.9 543.2,184.2 543.7,176.0 544.1,172.6 544.6,183.2 545.0,180.9 545.4,179.0 545.9,176.4 546.3,182.0 546.8,173.6 547.2,173.4 547.6,177.3 548.1,187.2 548.5,178.1 549.0,177.2 549.4,181.9 549.8,184.1 550.3,175.6 550.7,172.8 551.1,179.9 551.6,175.1 552.0,191.0 552.5,196.7 552.9,175.3 553.3,184.1 553.8,181.0 554.2,177.1 554.7,178.4 555.1,174.7 555.5,183.4 556.0,193.4 556.4,179.3 556.8,186.8 557.3,179.8 557.7,173.5 558.2,175.8 558.6,171.3 559.0,165.7 559.5,176.1 559.9,170.2 560.4,173.8 560.8,186.8 561.2,190.9 561.7,180.3 562.1,180.2 562.6,178.2 563.0,192.3 563.4,177.0 563.9,181.4 564.3,179.2 564.7,177.9 565.2,176.2 565.6,169.6 566.1,177.4 566.5,177.7 566.9,200.4 567.4,178.8 567.8,182.3 568.3,181.7 568.7,188.5 569.1,186.5 569.6,178.4 570.0,175.2 570.5,179.7 570.9,173.9 571.3,179.6 571.8,181.2 572.2,180.1 572.6,172.7 573.1,174.5 573.5,177.9 574.0,182.8 574.4,184.8 574.8,174.3 575.3,175.2 575.7,186.1 576.2,190.0 576.6,187.1 577.0,189.3 577.5,196.5 577.9,177.4 578.3,183.0 578.8,175.4 579.2,180.6 579.7,187.3 580.1,186.8 580.5,184.0 581.0,186.2 581.4,190.3 581.9,181.2 582.3,180.7 582.7,183.8 583.2,179.5 583.6,179.5 584.1,181.8 584.5,181.6 584.9,183.2 585.4,169.0 585.8,171.9 586.2,174.6 586.7,171.7 587.1,178.4 587.6,178.8 588.0,166.6 588.4,180.8 588.9,179.2 589.3,186.5 589.8,182.2 590.2,181.7 590.6,182.0 591.1,167.0 591.5,183.7 591.9,181.8 592.4,177.5 592.8,181.1 593.3,188.2 593.7,180.3 594.1,183.3 594.6,188.3 595.0,185.5 595.5,185.3 595.9,179.5 596.3,187.4 596.8,186.7 597.2,184.5 597.7,182.8 598.1,186.2 598.5,177.1 599.0,178.6 599.4,171.7 599.8,179.2 600.3,169.2 600.7,176.5 601.2,187.3 601.6,182.4 602.0,172.8 602.5,165.9 602.9,186.3 603.4,179.7 603.8,168.8 604.2,183.7 604.7,187.6 605.1,187.3 605.5,190.2 606.0,189.0 606.4,174.4 606.9,187.3 607.3,180.0 607.7,189.6 608.2,182.4 608.6,178.6 609.1,169.9 609.5,171.4 609.9,175.9 610.4,182.1 610.8,183.7 611.3,193.6 611.7,188.0 612.1,182.8 612.6,180.1 613.0,171.9 613.4,193.7 613.9,182.3 614.3,187.0 614.8,181.4 615.2,188.8 615.6,184.4 616.1,179.0 616.5,183.8 617.0,176.5 617.4,176.3 617.8,177.7 618.3,173.7 618.7,180.7 619.2,182.6 619.6,172.0 620.0,174.2 620.5,177.1 620.9,181.2 621.3,174.0 621.8,182.9 622.2,178.1 622.7,180.6 623.1,184.6 623.5,183.8 624.0,182.3 624.4,182.5 624.9,187.4 625.3,173.7 625.7,178.2 626.2,179.4 626.6,179.6 627.0,185.6 627.5,181.5 627.9,187.0 628.4,178.3 628.8,192.7 629.2,174.7 629.7,184.7 630.1,177.5 630.6,170.5 631.0,190.2 631.4,176.7 631.9,178.2 632.3,196.3 632.8,176.3 633.2,172.7 633.6,176.4 634.1,184.9 634.5,179.9 634.9,178.5 635.4,178.5 635.8,187.0 636.3,184.2 636.7,182.0 637.1,181.3 637.6,184.4 638.0,175.6 638.5,172.2 638.9,181.0 639.3,172.5 639.8,172.1 640.2,161.5 640.6,164.6 641.1,157.7 641.5,150.9 642.0,159.6 642.4,165.8 642.8,171.2 643.3,176.2 643.7,179.7 644.2,175.8 644.6,171.9 645.0,168.0 645.5,164.0 645.9,160.1 646.4,156.2 646.8,152.2 647.2,148.3 647.7,144.4 648.1,140.5 648.5,136.5 649.0,132.6 649.4,133.3 649.9,133.3 650.3,133.3 650.7,133.3 651.2,143.6 651.6,147.7 652.1,150.7 652.5,146.6 652.9,142.5 653.4,137.3 653.8,135.8 654.3,138.0 654.7,135.7 655.1,136.8 655.6,136.7 656.0,134.1 656.4,135.9 656.9,136.0 657.3,135.1 657.8,134.6 658.2,135.8 658.6,135.1 659.1,136.9 659.5,136.3 660.0,136.5 660.4,137.6 660.8,137.9 661.3,138.2 661.7,136.9 662.1,137.0 662.6,137.4 663.0,137.2 663.5,139.0 663.9,137.9 664.3,137.8 664.8,137.4 665.2,139.4 665.7,139.1 666.1,141.1 666.5,139.6 667.0,141.6 667.4,140.9 667.9,138.2 668.3,141.9 668.7,138.7 669.2,139.2 669.6,139.8 670.0,138.9 670.5,138.8 670.9,138.1 671.4,139.4 671.8,139.6 672.2,141.8 672.7,142.0 673.1,140.7 673.6,141.3 674.0,139.0 674.4,142.0 674.9,140.9 675.3,140.5 675.8,141.6 676.2,137.0 676.6,141.5 677.1,139.0 677.5,139.1 677.9,136.6 678.4,140.4 678.8,137.0 679.3,138.9 679.7,138.3 680.1,136.5 680.6,135.1 681.0,137.2 681.5,136.1 681.9,135.8 682.3,134.3 682.8,139.1 683.2,135.0 683.6,135.9 684.1,137.7 684.5,137.0 685.0,138.1 685.4,136.0 685.8,137.9 686.3,138.6 686.7,138.8 687.2,139.0 687.6,139.1 688.0,147.4 688.5,147.4 688.9,147.4 689.4,147.4 689.8,147.4 690.2,147.4 690.7,147.4 691.1,147.4 691.5,147.4 692.0,147.4 692.4,144.7 692.9,139.2 693.3,133.7 693.7,128.2 694.2,122.7 694.6,122.7 695.1,128.2 695.5,133.7 695.9,139.2 696.4,144.7 696.8,156.8 697.2,160.3 697.7,163.7 698.1,167.2 698.6,170.6 699.0,174.0 699.4,177.5 699.9,180.9 700.3,182.5 700.8,189.2 701.2,182.4 701.6,180.3 702.1,174.5 702.5,171.0 703.0,196.6 703.4,182.2 703.8,179.3 704.3,181.6 704.7,169.8 705.1,174.9 705.6,170.1 706.0,182.0 706.5,179.7 706.9,180.0 707.3,170.4 707.8,171.3 708.2,184.8 708.7,173.5 709.1,176.0 709.5,182.8 710.0,176.2 710.4,183.5 710.9,174.2 711.3,178.9 711.7,181.2 712.2,183.5 712.6,173.9 713.0,178.2 713.5,179.4 713.9,178.2 714.4,181.6 714.8,176.0 715.2,184.5 715.7,179.2 716.1,187.1 716.6,178.1 717.0,182.7 717.4,179.5 717.9,170.6 718.3,178.9 718.7,192.9 719.2,178.6 719.6,175.2 720.1,183.8 720.5,185.1 720.9,185.9 721.4,187.0 721.8,176.8 722.3,174.1 722.7,198.2 723.1,179.0 723.6,176.5 724.0,172.3 724.5,180.6 724.9,175.3 725.3,177.7 725.8,181.4 726.2,183.3 726.6,173.0 727.1,180.1 727.5,187.0 728.0,179.6 728.4,178.4 728.8,198.4 729.3,176.9 729.7,177.3 730.2,177.6 730.6,174.0 731.0,187.9 731.5,197.5 731.9,187.1 732.3,190.0 732.8,186.4 733.2,182.6 733.7,190.9 734.1,176.9 734.5,181.1 735.0,173.3 735.4,179.1 735.9,179.9 736.3,186.2 736.7,189.1 737.2,182.5 737.6,170.9 738.1,180.9 738.5,186.0 738.9,186.4 739.4,175.4 739.8,178.7 740.2,181.6 740.7,181.4 741.1,174.8 741.6,168.8 742.0,173.5 742.4,183.3 742.9,194.9 743.3,176.6 743.8,178.0 744.2,192.0 744.6,180.7 745.1,181.7 745.5,189.0 746.0,178.3 746.4,180.1 746.8,187.1 747.3,183.5 747.7,184.2 748.1,177.0 748.6,176.9 749.0,174.2 749.5,173.9 749.9,187.8 750.3,184.3 750.8,181.6 751.2,174.8 751.7,176.6 752.1,177.7 752.5,176.8 753.0,191.2 753.4,185.6 753.8,177.1 754.3,174.7 754.7,179.6 755.2,181.2 755.6,181.1 756.0,181.9 756.5,178.0 756.9,187.3 757.4,186.3 757.8,183.7 758.2,178.5 758.7,178.5 759.1,176.8 759.6,185.9 760.0,186.1 760.4,180.5 760.9,183.0 761.3,178.1 761.7,165.4 762.2,178.6 762.6,186.9 763.1,180.0 763.5,178.8 763.9,170.8 764.4,201.3 764.8,175.7 765.3,175.7 765.7,175.0 766.1,179.7 766.6,175.8 767.0,183.9 767.4,179.6 767.9,179.0 768.3,187.0 768.8,188.4 769.2,178.6 769.6,187.0 770.1,183.7 770.5,193.0 771.0,179.0 771.4,177.4 771.8,174.9 772.3,188.1 772.7,186.5 773.2,184.8 773.6,188.0 774.0,186.7 774.5,177.7 774.9,178.7 775.3,175.3 775.8,179.2 776.2,177.9 776.7,175.0 777.1,183.5 777.5,201.5 778.0,186.7 778.4,187.3 778.9,183.1 779.3,178.4 779.7,181.2 780.2,173.7 780.6,176.6 781.0,172.0 781.5,167.8 781.9,183.1 782.4,170.3 782.8,186.3 783.2,171.9 783.7,168.1 784.1,169.3 784.6,178.5 785.0,177.4 785.4,179.2 785.9,189.4 786.3,181.7 786.8,177.9 787.2,172.9 787.6,188.8 788.1,176.3 788.5,186.8 788.9,178.3 789.4,177.4 789.8,183.0 790.3,174.1 790.7,177.2 791.1,188.5 791.6,180.3 792.0,177.3 792.5,180.4 792.9,170.5 793.3,168.2 793.8,176.4 794.2,173.4 794.7,180.9 795.1,170.7 795.5,173.0 796.0,184.9 796.4,181.2 796.8,182.0 797.3,183.7 797.7,183.6 798.2,179.6 798.6,191.1 799.0,180.9 799.5,199.8 799.9,168.2 800.4,174.6 800.8,180.7 801.2,183.5 801.7,179.0 802.1,181.7 802.5,167.1 803.0,180.2 803.4,186.9 803.9,175.5 804.3,174.5 804.7,182.0 805.2,181.1 805.6,181.1 806.1,185.5 806.5,172.2 806.9,180.6 807.4,183.7 807.8,177.6 808.3,176.6 808.7,181.3 809.1,181.0 809.6,176.6 810.0,177.8 810.4,182.0 810.9,175.2 811.3,180.3 811.8,191.7 812.2,187.3 812.6,183.0 813.1,178.4 813.5,199.8 814.0,180.3 814.4,172.2 814.8,183.0 815.3,181.2 815.7,187.3 816.2,183.2 816.6,185.9 817.0,177.3 817.5,176.8 817.9,174.1 818.3,168.8 818.8,182.5 819.2,179.4 819.7,178.9 820.1,179.8 820.5,176.5 821.0,181.7 821.4,176.8 821.9,182.9 822.3,178.7 822.7,176.8 823.2,185.7 823.6,186.0 824.0,180.4 824.5,174.2 824.9,173.9 825.4,171.5 825.8,175.1 826.2,174.6 826.7,179.3 827.1,179.2 827.6,175.5 828.0,180.9 828.4,179.7 828.9,171.6 829.3,173.4 829.8,173.4 830.2,170.7 830.6,178.7 831.1,174.9 831.5,175.5 831.9,173.3 832.4,180.2 832.8,179.4 833.3,178.0 833.7,186.5" fill="none" stroke="#d4661a" stroke-width="0.7" stroke-linejoin="round" opacity="0.85"/>
<polyline points="482.7,183.8 483.1,185.0 483.6,194.2 484.0,189.4 484.5,187.0 484.9,188.6 485.3,180.7 485.8,182.6 486.2,178.8 486.6,168.1 487.1,175.0 487.5,179.9 488.0,169.1 488.4,175.9 488.8,168.2 489.3,176.8 489.7,184.7 490.2,181.6 490.6,183.5 491.0,191.0 491.5,183.2 491.9,177.3 492.4,196.9 492.8,172.6 493.2,180.0 493.7,170.6 494.1,183.6 494.5,178.7 495.0,170.6 495.4,193.8 495.9,188.6 496.3,174.5 496.7,174.3 497.2,178.1 497.6,174.2 498.1,178.8 498.5,178.0 498.9,180.4 499.4,178.0 499.8,179.2 500.2,182.0 500.7,173.7 501.1,171.9 501.6,179.4 502.0,177.7 502.4,176.4 502.9,196.7 503.3,177.5 503.8,180.9 504.2,177.0 504.6,182.7 505.1,178.0 505.5,172.8 506.0,175.8 506.4,178.9 506.8,189.8 507.3,177.2 507.7,174.9 508.1,178.8 508.6,173.4 509.0,171.9 509.5,177.4 509.9,181.9 510.3,178.6 510.8,188.4 511.2,171.0 511.7,180.7 512.1,178.8 512.5,176.5 513.0,187.1 513.4,179.3 513.9,185.7 514.3,184.9 514.7,174.3 515.2,176.4 515.6,184.9 516.0,198.4 516.5,184.6 516.9,182.3 517.4,183.9 517.8,178.4 518.2,182.4 518.7,177.2 519.1,181.8 519.6,184.0 520.0,191.6 520.4,184.4 520.9,180.3 521.3,185.9 521.7,179.1 522.2,174.6 522.6,170.1 523.1,182.0 523.5,176.0 523.9,177.9 524.4,179.2 524.8,180.4 525.3,181.5 525.7,173.9 526.1,175.8 526.6,174.9 527.0,174.3 527.5,172.1 527.9,175.5 528.3,180.5 528.8,193.3 529.2,179.7 529.6,173.9 530.1,178.0 530.5,177.3 531.0,182.1 531.4,180.4 531.8,176.7 532.3,182.3 532.7,181.0 533.2,177.0 533.6,166.0 534.0,178.5 534.5,178.1 534.9,178.3 535.4,180.2 535.8,180.4 536.2,182.3 536.7,175.7 537.1,173.1 537.5,177.7 538.0,181.1 538.4,181.0 538.9,182.5 539.3,177.2 539.7,179.2 540.2,173.3 540.6,180.7 541.1,177.5 541.5,172.3 541.9,176.3 542.4,177.0 542.8,181.4 543.2,175.1 543.7,177.7 544.1,182.0 544.6,184.2 545.0,179.5 545.4,182.5 545.9,181.0 546.3,173.4 546.8,187.4 547.2,184.3 547.6,171.2 548.1,199.9 548.5,184.6 549.0,177.1 549.4,188.2 549.8,179.6 550.3,176.7 550.7,180.4 551.1,170.6 551.6,172.7 552.0,178.7 552.5,170.4 552.9,182.2 553.3,178.4 553.8,174.7 554.2,172.2 554.7,175.6 555.1,169.0 555.5,168.5 556.0,174.6 556.4,177.8 556.8,179.5 557.3,185.6 557.7,189.3 558.2,183.8 558.6,169.5 559.0,178.4 559.5,184.8 559.9,179.2 560.4,177.2 560.8,178.5 561.2,187.9 561.7,183.2 562.1,173.6 562.6,178.2 563.0,177.1 563.4,181.7 563.9,183.2 564.3,182.1 564.7,181.7 565.2,179.1 565.6,184.1 566.1,185.0 566.5,174.4 566.9,178.4 567.4,179.9 567.8,174.2 568.3,172.8 568.7,181.0 569.1,196.0 569.6,175.7 570.0,176.7 570.5,177.5 570.9,175.7 571.3,176.5 571.8,180.1 572.2,178.3 572.6,174.0 573.1,179.1 573.5,176.8 574.0,176.2 574.4,182.4 574.8,184.4 575.3,183.2 575.7,178.5 576.2,197.8 576.6,199.6 577.0,179.2 577.5,182.1 577.9,182.6 578.3,177.8 578.8,175.8 579.2,175.7 579.7,179.4 580.1,176.5 580.5,174.5 581.0,166.8 581.4,173.2 581.9,179.7 582.3,185.1 582.7,174.8 583.2,172.7 583.6,177.2 584.1,190.6 584.5,174.7 584.9,175.1 585.4,179.5 585.8,173.7 586.2,177.7 586.7,180.8 587.1,172.6 587.6,179.3 588.0,176.8 588.4,177.8 588.9,172.4 589.3,175.1 589.8,178.7 590.2,176.7 590.6,188.8 591.1,180.3 591.5,174.3 591.9,175.8 592.4,181.0 592.8,198.2 593.3,175.5 593.7,172.5 594.1,173.3 594.6,174.9 595.0,171.8 595.5,179.6 595.9,172.8 596.3,176.2 596.8,182.4 597.2,174.7 597.7,179.2 598.1,173.7 598.5,174.1 599.0,174.5 599.4,175.6 599.8,181.3 600.3,178.9 600.7,176.4 601.2,177.7 601.6,185.8 602.0,178.8 602.5,173.9 602.9,180.2 603.4,171.5 603.8,181.1 604.2,185.5 604.7,177.3 605.1,184.3 605.5,180.9 606.0,182.4 606.4,178.1 606.9,176.9 607.3,179.6 607.7,182.0 608.2,180.2 608.6,179.1 609.1,184.3 609.5,172.5 609.9,176.2 610.4,172.8 610.8,170.7 611.3,175.9 611.7,172.9 612.1,173.6 612.6,187.6 613.0,176.9 613.4,182.2 613.9,169.7 614.3,183.6 614.8,176.7 615.2,171.6 615.6,177.8 616.1,179.5 616.5,193.1 617.0,187.8 617.4,179.5 617.8,179.1 618.3,175.3 618.7,177.5 619.2,181.5 619.6,170.1 620.0,177.2 620.5,180.1 620.9,177.2 621.3,175.2 621.8,176.8 622.2,175.3 622.7,179.4 623.1,182.4 623.5,187.8 624.0,181.1 624.4,178.5 624.9,176.4 625.3,184.7 625.7,181.0 626.2,175.3 626.6,168.9 627.0,176.9 627.5,180.7 627.9,184.0 628.4,185.6 628.8,184.0 629.2,177.9 629.7,177.2 630.1,177.5 630.6,185.5 631.0,181.2 631.4,171.6 631.9,182.3 632.3,189.6 632.8,177.0 633.2,184.5 633.6,189.7 634.1,182.2 634.5,196.1 634.9,180.9 635.4,184.7 635.8,188.1 636.3,182.4 636.7,177.8 637.1,179.1 637.6,182.9 638.0,180.7 638.5,175.4 638.9,174.2 639.3,171.5 639.8,170.9 640.2,174.1 640.6,177.9 641.1,183.0 641.5,176.1 642.0,180.0 642.4,183.8 642.8,178.2 643.3,180.6 643.7,180.6 644.2,183.2 644.6,185.2 645.0,188.9 645.5,180.0 645.9,174.7 646.4,182.8 646.8,182.3 647.2,187.8 647.7,179.7 648.1,176.0 648.5,179.3 649.0,180.0 649.4,175.2 649.9,185.2 650.3,173.6 650.7,178.9 651.2,177.0 651.6,176.9 652.1,184.8 652.5,178.0 652.9,183.0 653.4,176.1 653.8,181.4 654.3,181.6 654.7,168.1 655.1,178.3 655.6,179.0 656.0,182.3 656.4,183.9 656.9,173.6 657.3,178.5 657.8,172.9 658.2,180.4 658.6,180.6 659.1,180.3 659.5,178.9 660.0,179.3 660.4,180.1 660.8,192.2 661.3,179.8 661.7,176.7 662.1,178.7 662.6,170.3 663.0,186.2 663.5,182.1 663.9,178.0 664.3,175.7 664.8,165.1 665.2,171.7 665.7,174.7 666.1,178.9 666.5,178.5 667.0,184.1 667.4,177.2 667.9,197.1 668.3,179.3 668.7,172.3 669.2,183.0 669.6,171.5 670.0,176.6 670.5,176.9 670.9,182.7 671.4,178.3 671.8,173.5 672.2,178.6 672.7,171.6 673.1,178.3 673.6,177.8 674.0,195.0 674.4,179.7 674.9,180.7 675.3,180.3 675.8,177.7 676.2,178.5 676.6,179.1 677.1,170.6 677.5,173.1 677.9,172.3 678.4,174.8 678.8,176.2 679.3,181.4 679.7,175.1 680.1,177.1 680.6,171.9 681.0,176.9 681.5,180.4 681.9,170.7 682.3,175.9 682.8,184.1 683.2,185.0 683.6,175.4 684.1,187.4 684.5,184.3 685.0,177.6 685.4,185.4 685.8,181.4 686.3,175.1 686.7,177.7 687.2,173.6 687.6,174.7 688.0,185.5 688.5,173.2 688.9,175.7 689.4,177.9 689.8,175.2 690.2,172.4 690.7,169.7 691.1,166.9 691.5,164.2 692.0,149.0 692.4,133.9 692.9,122.1 693.3,113.6 693.7,108.5 694.2,106.6 694.6,108.1 695.1,112.9 695.5,121.1 695.9,132.5 696.4,147.3 696.8,163.9 697.2,166.6 697.7,169.4 698.1,166.1 698.6,174.9 699.0,177.6 699.4,180.4 699.9,183.1 700.3,186.3 700.8,187.3 701.2,198.9 701.6,174.9 702.1,173.1 702.5,180.0 703.0,179.6 703.4,167.2 703.8,176.6 704.3,176.3 704.7,179.5 705.1,180.9 705.6,180.9 706.0,183.6 706.5,177.3 706.9,175.1 707.3,172.6 707.8,180.3 708.2,176.9 708.7,186.6 709.1,180.6 709.5,174.4 710.0,181.9 710.4,184.0 710.9,179.2 711.3,182.7 711.7,197.4 712.2,182.8 712.6,184.3 713.0,185.5 713.5,181.1 713.9,177.1 714.4,186.0 714.8,175.1 715.2,172.7 715.7,166.6 716.1,177.5 716.6,178.2 717.0,172.2 717.4,175.7 717.9,188.5 718.3,181.6 718.7,172.7 719.2,172.0 719.6,164.7 720.1,167.9 720.5,176.5 720.9,171.9 721.4,175.2 721.8,172.0 722.3,183.7 722.7,187.5 723.1,183.1 723.6,179.9 724.0,183.6 724.5,178.5 724.9,182.1 725.3,179.2 725.8,186.3 726.2,178.8 726.6,176.3 727.1,170.8 727.5,173.9 728.0,177.2 728.4,184.1 728.8,177.6 729.3,178.8 729.7,180.5 730.2,179.8 730.6,177.4 731.0,177.7 731.5,182.3 731.9,188.8 732.3,180.2 732.8,183.6 733.2,171.3 733.7,187.6 734.1,174.0 734.5,197.9 735.0,185.5 735.4,175.9 735.9,183.2 736.3,181.4 736.7,182.9 737.2,180.9 737.6,185.2 738.1,180.2 738.5,178.7 738.9,177.6 739.4,179.3 739.8,176.2 740.2,175.6 740.7,176.9 741.1,169.1 741.6,178.0 742.0,197.4 742.4,185.7 742.9,183.9 743.3,182.3 743.8,172.1 744.2,176.5 744.6,182.9 745.1,180.0 745.5,169.7 746.0,168.1 746.4,175.0 746.8,185.3 747.3,176.8 747.7,169.6 748.1,174.8 748.6,174.1 749.0,182.8 749.5,180.1 749.9,179.3 750.3,178.0 750.8,176.5 751.2,179.2 751.7,190.0 752.1,180.3 752.5,171.5 753.0,167.0 753.4,178.3 753.8,182.5 754.3,189.7 754.7,177.0 755.2,185.1 755.6,179.2 756.0,188.0 756.5,186.6 756.9,176.9 757.4,179.0 757.8,183.4 758.2,179.5 758.7,171.4 759.1,185.3 759.6,181.9 760.0,182.7 760.4,182.1 760.9,176.5 761.3,177.7 761.7,172.2 762.2,176.5 762.6,182.7 763.1,169.9 763.5,174.5 763.9,177.2 764.4,186.4 764.8,179.1 765.3,183.0 765.7,183.1 766.1,187.6 766.6,177.4 767.0,177.3 767.4,179.6 767.9,181.8 768.3,184.6 768.8,183.3 769.2,177.2 769.6,180.6 770.1,172.2 770.5,170.9 771.0,173.1 771.4,171.5 771.8,175.1 772.3,175.3 772.7,174.4 773.2,178.9 773.6,181.5 774.0,182.6 774.5,169.0 774.9,182.3 775.3,169.9 775.8,174.3 776.2,170.4 776.7,173.6 777.1,180.3 777.5,177.6 778.0,179.3 778.4,179.3 778.9,169.8 779.3,185.2 779.7,180.4 780.2,182.4 780.6,184.7 781.0,176.4 781.5,174.1 781.9,181.4 782.4,174.2 782.8,192.4 783.2,177.2 783.7,176.5 784.1,178.8 784.6,193.3 785.0,171.9 785.4,180.2 785.9,172.4 786.3,173.2 786.8,182.5 787.2,183.4 787.6,178.9 788.1,175.0 788.5,180.4 788.9,174.4 789.4,179.0 789.8,173.1 790.3,171.3 790.7,177.0 791.1,175.1 791.6,180.4 792.0,176.7 792.5,181.8 792.9,201.6 793.3,181.2 793.8,181.9 794.2,189.3 794.7,181.2 795.1,182.4 795.5,173.8 796.0,171.8 796.4,175.1 796.8,174.2 797.3,176.3 797.7,185.0 798.2,172.8 798.6,172.8 799.0,177.3 799.5,166.1 799.9,165.4 800.4,170.8 800.8,183.4 801.2,179.8 801.7,176.9 802.1,178.6 802.5,178.3 803.0,173.7 803.4,183.2 803.9,183.8 804.3,181.3 804.7,175.4 805.2,176.7 805.6,174.8 806.1,175.6 806.5,186.5 806.9,179.6 807.4,180.6 807.8,174.6 808.3,172.2 808.7,183.3 809.1,173.3 809.6,187.7 810.0,177.4 810.4,174.9 810.9,178.9 811.3,170.9 811.8,171.8 812.2,172.4 812.6,186.3 813.1,179.5 813.5,175.9 814.0,176.2 814.4,171.3 814.8,172.2 815.3,185.6 815.7,181.3 816.2,184.4 816.6,184.0 817.0,185.9 817.5,179.0 817.9,184.1 818.3,177.7 818.8,177.2 819.2,178.4 819.7,174.6 820.1,176.6 820.5,176.2 821.0,178.8 821.4,179.1 821.9,179.1 822.3,174.4 822.7,180.4 823.2,181.4 823.6,178.8 824.0,184.2 824.5,178.9 824.9,179.5 825.4,179.5 825.8,182.0 826.2,172.9 826.7,182.2 827.1,183.8 827.6,181.5 828.0,186.2 828.4,181.4 828.9,180.2 829.3,184.4 829.8,179.5 830.2,189.5 830.6,178.8 831.1,174.2 831.5,177.5 831.9,171.0 832.4,172.3 832.8,174.5 833.3,186.3 833.7,185.7" fill="none" stroke="#c6c41c" stroke-width="0.7" stroke-linejoin="round" opacity="0.82"/>
</g>
<path d="M645.4 141.6 l3.1 3.3 l-3.1 3.3 l-3.1 -3.3 z" fill="#ffffff"/>
<text x="642.4" y="140.2" font-size="4.5" fill="#ffffff" stroke="#ffffff" stroke-width="0.13" textLength="6" lengthAdjust="spacingAndGlyphs" opacity="0.99" >MR</text>
<path d="M655.6 210.3 l2.9 6.6 l2.9 -6.6" stroke="#a8a8a8" stroke-width="0.8" fill="none"/>
<text x="487.5" y="67.8" font-size="5.1" fill="#f4f4f4" stroke="#f4f4f4" stroke-width="0.13" textLength="34.5" lengthAdjust="spacingAndGlyphs" opacity="0.99" >MR: -55.72 dBm</text>
<text x="487.5" y="73.2" font-size="5.1" fill="#f4f4f4" stroke="#f4f4f4" stroke-width="0.13" textLength="22.5" lengthAdjust="spacingAndGlyphs" opacity="0.99" >1.926 GHz</text>
<path d="M463.6 52.6 l2 2.2 l2 -2.2" stroke="#6a6a70" stroke-width="1.2" fill="none"/>
<text x="470.5" y="56" font-size="5.45" fill="#1e1e1e" stroke="#1e1e1e" stroke-width="0.13" textLength="30.5" lengthAdjust="spacingAndGlyphs" >Spectrogram</text>
<rect x="510" y="50.6" width="5.6" height="5.8" fill="#f4f9fd" stroke="#6faedb" stroke-width="0.8" rx="0.6"/><path d="M511.2 53.6 l1.3 1.4 l2.1 -2.9" stroke="#2f7fc0" stroke-width="0.9" fill="none"/>
<text x="517.6" y="55.8" font-size="5.45" fill="#1e1e1e" stroke="#1e1e1e" stroke-width="0.13" textLength="13.5" lengthAdjust="spacingAndGlyphs" >Show</text>
<text x="536" y="55.8" font-size="5.19" fill="#1e1e1e" stroke="#1e1e1e" stroke-width="0.13" textLength="14.5" lengthAdjust="spacingAndGlyphs" >+Peak</text>
<rect x="820.2" y="50.3" width="17.4" height="8.2" fill="url(#gBtn)" stroke="#6faedb" stroke-width="0.8" rx="0.8"/><text x="828.9000000000001" y="56.28" font-size="5.36" fill="#1e1e1e" stroke="#1e1e1e" stroke-width="0.13" text-anchor="middle" textLength="12.5" lengthAdjust="spacingAndGlyphs">Clear</text>
<path d="M422.7 62.9 L424.4 60.9 L426.1 62.9 Z" fill="#6b6478"/><path d="M422.9 63.0 H425.9 L424.4 64.5 Z" fill="#4a4a52"/>
<text x="430" y="65" font-size="5.45" fill="#1e1e1e" stroke="#1e1e1e" stroke-width="0.13" textLength="11" lengthAdjust="spacingAndGlyphs" >0.00</text>
<rect x="428.5" y="68.6" width="31" height="8.6" fill="#fff" stroke="#a9c4dc" stroke-width="0.7"/>
<text x="430.5" y="75.4" font-size="5.28" fill="#1e1e1e" stroke="#1e1e1e" stroke-width="0.13" textLength="10.5" lengthAdjust="spacingAndGlyphs" >dBm</text>
<rect x="453.3" y="69.6" width="5.8" height="6.8" fill="#dceefa" stroke="#5b9bd5" stroke-width="0.7" rx="0.8"/>
<path d="M454.7 72.4 l1.5 1.5 l1.5 -1.5" stroke="#2f7fc0" stroke-width="0.8" fill="none"/>
<path d="M422.7 95.7 L424.4 93.7 L426.1 95.7 Z" fill="#6b6478"/><path d="M422.9 95.8 H425.9 L424.4 97.3 Z" fill="#4a4a52"/>
<text x="428.5" y="93.8" font-size="5.45" fill="#1e1e1e" stroke="#1e1e1e" stroke-width="0.13" textLength="16.5" lengthAdjust="spacingAndGlyphs" >dB/div:</text>
<text x="430" y="100.6" font-size="5.45" fill="#1e1e1e" stroke="#1e1e1e" stroke-width="0.13" textLength="18.5" lengthAdjust="spacingAndGlyphs" >10.0 dB</text>
<path d="M422.7 113.1 L424.4 111.1 L426.1 113.1 Z" fill="#6b6478"/><path d="M422.9 113.2 H425.9 L424.4 114.7 Z" fill="#4a4a52"/>
<text x="428.5" y="111" font-size="5.45" fill="#1e1e1e" stroke="#1e1e1e" stroke-width="0.13" textLength="12.5" lengthAdjust="spacingAndGlyphs" >RBW:</text>
<text x="430" y="118.4" font-size="5.45" fill="#1e1e1e" stroke="#1e1e1e" stroke-width="0.13" textLength="22.5" lengthAdjust="spacingAndGlyphs" >5.00 MHz</text>
<rect x="425.6" y="122.2" width="5.6" height="5.8" fill="#f4f9fd" stroke="#6faedb" stroke-width="0.8" rx="0.6"/>
<text x="433" y="127.5" font-size="5.45" fill="#1e1e1e" stroke="#1e1e1e" stroke-width="0.13" textLength="12.5" lengthAdjust="spacingAndGlyphs" >VBW:</text>
<text x="426" y="147.6" font-size="5.45" fill="#1e1e1e" stroke="#1e1e1e" stroke-width="0.13" textLength="25.5" lengthAdjust="spacingAndGlyphs" >Segments:</text>
<text x="426.5" y="156" font-size="5.45" fill="#1e1e1e" stroke="#1e1e1e" stroke-width="0.13" >1</text>
<rect x="424.2" y="221.2" width="31.6" height="8.3" fill="url(#gBtn)" stroke="#6faedb" stroke-width="0.8" rx="0.8"/><text x="440.0" y="227.23" font-size="5.36" fill="#1e1e1e" stroke="#1e1e1e" stroke-width="0.13" text-anchor="middle" textLength="24" lengthAdjust="spacingAndGlyphs">Autoscale</text>
<path d="M484.3 225.5 L486 223.5 L487.7 225.5 Z" fill="#6b6478"/><path d="M484.5 225.6 H487.5 L486 227.1 Z" fill="#4a4a52"/>
<text x="491.5" y="227.2" font-size="5.28" fill="#1e1e1e" stroke="#1e1e1e" stroke-width="0.13" textLength="11.5" lengthAdjust="spacingAndGlyphs" >Start</text>
<text x="508.5" y="227.2" font-size="5.28" fill="#1e1e1e" stroke="#1e1e1e" stroke-width="0.13" textLength="31" lengthAdjust="spacingAndGlyphs" >1.00000 GHz</text>
<path d="M764.3 225.5 L766 223.5 L767.7 225.5 Z" fill="#6b6478"/><path d="M764.5 225.6 H767.5 L766 227.1 Z" fill="#4a4a52"/>
<text x="771.5" y="227.2" font-size="5.28" fill="#1e1e1e" stroke="#1e1e1e" stroke-width="0.13" textLength="11" lengthAdjust="spacingAndGlyphs" >Stop</text>
<text x="786" y="227.2" font-size="5.28" fill="#1e1e1e" stroke="#1e1e1e" stroke-width="0.13" textLength="31" lengthAdjust="spacingAndGlyphs" >3.00000 GHz</text>
<rect x="489" y="261.2" width="347" height="146.8" fill="#000000" />
<line x1="523.81" y1="261.2" x2="523.81" y2="408" stroke="#585858" stroke-width="0.7"/>
<line x1="489" y1="275.88" x2="836" y2="275.88" stroke="#585858" stroke-width="0.7"/>
<line x1="558.62" y1="261.2" x2="558.62" y2="408" stroke="#585858" stroke-width="0.7"/>
<line x1="489" y1="290.56" x2="836" y2="290.56" stroke="#585858" stroke-width="0.7"/>
<line x1="593.43" y1="261.2" x2="593.43" y2="408" stroke="#585858" stroke-width="0.7"/>
<line x1="489" y1="305.24" x2="836" y2="305.24" stroke="#585858" stroke-width="0.7"/>
<line x1="628.24" y1="261.2" x2="628.24" y2="408" stroke="#585858" stroke-width="0.7"/>
<line x1="489" y1="319.92" x2="836" y2="319.92" stroke="#585858" stroke-width="0.7"/>
<line x1="663.05" y1="261.2" x2="663.05" y2="408" stroke="#585858" stroke-width="0.7"/>
<line x1="489" y1="334.6" x2="836" y2="334.6" stroke="#585858" stroke-width="0.7"/>
<line x1="697.86" y1="261.2" x2="697.86" y2="408" stroke="#585858" stroke-width="0.7"/>
<line x1="489" y1="349.28" x2="836" y2="349.28" stroke="#585858" stroke-width="0.7"/>
<line x1="732.67" y1="261.2" x2="732.67" y2="408" stroke="#585858" stroke-width="0.7"/>
<line x1="489" y1="363.96" x2="836" y2="363.96" stroke="#585858" stroke-width="0.7"/>
<line x1="767.48" y1="261.2" x2="767.48" y2="408" stroke="#585858" stroke-width="0.7"/>
<line x1="489" y1="378.64" x2="836" y2="378.64" stroke="#585858" stroke-width="0.7"/>
<line x1="802.29" y1="261.2" x2="802.29" y2="408" stroke="#585858" stroke-width="0.7"/>
<line x1="489" y1="393.32" x2="836" y2="393.32" stroke="#585858" stroke-width="0.7"/>
<text x="482" y="263.5" font-size="5.28" fill="#1e1e1e" stroke="#1e1e1e" stroke-width="0.13" text-anchor="end" >-11.6</text>
<line x1="485.6" y1="261.7" x2="487.2" y2="261.7" stroke="#444" stroke-width="0.7"/>
<text x="482" y="292.9" font-size="5.28" fill="#1e1e1e" stroke="#1e1e1e" stroke-width="0.13" text-anchor="end" >-19.6</text>
<line x1="485.6" y1="291.1" x2="487.2" y2="291.1" stroke="#444" stroke-width="0.7"/>
<text x="482" y="322.2" font-size="5.28" fill="#1e1e1e" stroke="#1e1e1e" stroke-width="0.13" text-anchor="end" >-27.6</text>
<line x1="485.6" y1="320.4" x2="487.2" y2="320.4" stroke="#444" stroke-width="0.7"/>
<text x="482" y="351.6" font-size="5.28" fill="#1e1e1e" stroke="#1e1e1e" stroke-width="0.13" text-anchor="end" >-35.6</text>
<line x1="485.6" y1="349.8" x2="487.2" y2="349.8" stroke="#444" stroke-width="0.7"/>
<text x="482" y="380.9" font-size="5.28" fill="#1e1e1e" stroke="#1e1e1e" stroke-width="0.13" text-anchor="end" >-43.6</text>
<line x1="485.6" y1="379.1" x2="487.2" y2="379.1" stroke="#444" stroke-width="0.7"/>
<text x="482" y="410.3" font-size="5.28" fill="#1e1e1e" stroke="#1e1e1e" stroke-width="0.13" text-anchor="end" >-51.6</text>
<line x1="485.6" y1="408.5" x2="487.2" y2="408.5" stroke="#444" stroke-width="0.7"/>
<polygon points="489,310.2 489.6,310.3 490.2,311.3 490.8,309.7 491.4,308.6 492.0,312.5 492.6,311.2 493.2,310.1 493.8,311.1 494.4,308.4 495.0,312.2 495.6,312.1 496.2,310.0 496.8,312.7 497.4,311.2 498.0,309.8 498.6,311.4 499.2,310.5 499.8,310.4 500.4,311.0 501.0,310.1 501.6,312.2 502.2,311.3 502.8,312.9 503.4,312.9 504.0,312.7 504.6,311.0 505.2,310.4 505.8,312.7 506.4,312.0 507.0,313.1 507.6,311.8 508.2,312.2 508.8,312.8 509.4,312.7 510.0,312.0 510.6,311.0 511.2,311.2 511.8,312.6 512.4,311.4 513.0,310.9 513.6,313.5 514.2,311.2 514.8,311.9 515.4,312.4 516.0,312.8 516.6,313.2 517.2,312.3 517.8,311.5 518.4,312.4 519.0,311.6 519.6,311.6 520.2,313.1 520.8,311.6 521.4,314.2 522.0,312.8 522.6,311.8 523.2,314.4 523.8,313.7 524.4,312.3 525.0,314.2 525.6,312.6 526.2,313.3 526.8,314.0 527.4,313.8 528.0,313.7 528.6,312.3 529.2,312.1 529.8,314.5 530.4,312.3 531.0,312.0 531.6,314.5 532.2,311.5 532.8,311.3 533.4,312.8 534.0,313.9 534.6,311.8 535.2,313.8 535.8,311.2 536.4,313.6 537.0,313.8 537.6,313.7 538.2,312.0 538.8,311.2 539.4,310.0 540.0,313.1 540.6,313.9 541.2,313.2 541.8,309.7 542.4,312.8 543.0,311.3 543.6,313.0 544.2,312.5 544.8,313.8 545.4,311.8 546.0,312.8 546.6,313.5 547.2,313.2 547.8,310.9 548.4,313.3 549.0,312.0 549.6,311.3 550.2,313.5 550.8,312.0 551.4,312.8 552.0,312.2 552.6,310.8 553.2,313.1 553.8,310.2 554.4,312.6 555.0,313.2 555.6,312.0 556.2,312.1 556.8,313.7 557.4,313.4 558.0,313.7 558.6,313.0 559.2,313.2 559.8,312.7 560.4,312.2 561.0,309.8 561.6,311.6 562.2,313.6 562.8,314.5 563.4,312.6 564.0,312.9 564.6,311.5 565.2,313.5 565.8,312.1 566.4,310.6 567.0,313.8 567.6,313.5 568.2,312.5 568.8,312.7 569.4,313.8 570.0,312.0 570.6,313.2 571.2,315.0 571.8,315.2 572.4,314.5 573.0,314.4 573.6,312.4 574.2,314.9 574.8,312.7 575.4,313.6 576.0,314.5 576.6,313.1 577.2,313.1 577.8,312.6 578.4,314.7 579.0,314.9 579.6,314.5 580.2,313.6 580.8,314.8 581.4,315.4 582.0,313.8 582.6,314.6 583.2,314.5 583.8,315.5 584.4,314.8 585.0,313.9 585.6,313.7 586.2,313.9 586.8,312.8 587.4,314.8 588.0,312.8 588.6,315.6 589.2,314.6 589.8,315.4 590.4,313.2 591.0,312.8 591.6,314.8 592.2,315.0 592.8,314.6 593.4,312.9 594.0,314.9 594.6,313.1 595.2,315.3 595.8,313.5 596.4,313.9 597.0,312.2 597.6,312.4 598.2,312.4 598.8,313.9 599.4,314.9 600.0,313.7 600.6,312.3 601.2,311.9 601.8,312.7 602.4,312.0 603.0,312.3 603.6,314.4 604.2,313.9 604.8,313.4 605.4,312.5 606.0,314.6 606.6,314.1 607.2,312.5 607.8,312.0 608.4,313.4 609.0,314.8 609.6,313.0 610.2,314.0 610.8,312.9 611.4,314.8 612.0,313.7 612.6,313.0 613.2,314.1 613.8,313.0 614.4,312.5 615.0,312.2 615.6,314.8 616.2,314.7 616.8,312.7 617.4,313.5 618.0,312.9 618.6,313.4 619.2,314.1 619.8,314.8 620.4,314.1 621.0,313.5 621.6,315.2 622.2,313.9 622.8,315.0 623.4,315.3 624.0,315.3 624.6,315.8 625.2,315.4 625.8,313.2 626.4,316.1 627.0,314.1 627.6,313.5 628.2,315.2 628.8,314.8 629.4,315.9 630.0,314.9 630.6,314.0 631.2,315.3 631.8,316.4 632.4,314.3 633.0,316.2 633.6,314.6 634.2,313.5 634.8,315.3 635.4,315.8 636.0,313.8 636.6,315.9 637.2,313.7 637.8,315.3 638.4,315.8 639.0,315.1 639.6,315.6 640.2,314.2 640.8,315.6 641.4,315.1 642.0,312.5 642.6,314.2 643.2,316.5 643.8,313.8 644.4,314.4 645.0,314.0 645.6,316.2 646.2,315.2 646.8,312.0 647.4,315.9 648.0,314.9 648.6,315.3 649.2,313.3 649.8,314.5 650.4,313.1 651.0,313.2 651.6,313.6 652.2,314.6 652.8,315.6 653.4,314.1 654.0,315.4 654.6,314.4 655.2,314.7 655.8,314.0 656.4,312.8 657.0,313.1 657.6,312.9 658.2,312.9 658.8,311.1 659.4,314.3 660.0,315.6 660.6,315.9 661.2,315.2 661.8,315.9 662.4,313.8 663.0,314.4 663.6,314.0 664.2,314.7 664.8,315.3 665.4,312.9 666.0,315.2 666.6,315.5 667.2,315.6 667.8,313.9 668.4,313.4 669.0,314.8 669.6,314.7 670.2,314.3 670.8,315.7 671.4,314.5 672.0,314.0 672.6,314.4 673.2,313.7 673.8,316.0 674.4,316.3 674.4,328.3 673.8,330.1 673.2,328.7 672.6,327.9 672.0,329.3 671.4,330.0 670.8,328.1 670.2,328.0 669.6,329.8 669.0,327.2 668.4,327.2 667.8,327.1 667.2,328.7 666.6,328.4 666.0,329.2 665.4,327.6 664.8,328.8 664.2,326.9 663.6,327.1 663.0,327.6 662.4,328.8 661.8,327.0 661.2,328.5 660.6,328.6 660.0,329.0 659.4,327.1 658.8,327.0 658.2,327.9 657.6,328.8 657.0,327.3 656.4,326.8 655.8,329.2 655.2,328.4 654.6,327.2 654.0,328.6 653.4,329.6 652.8,328.4 652.2,328.5 651.6,328.4 651.0,329.2 650.4,328.5 649.8,329.9 649.2,330.0 648.6,329.8 648.0,328.8 647.4,329.3 646.8,329.1 646.2,329.3 645.6,329.0 645.0,328.5 644.4,328.1 643.8,328.7 643.2,328.4 642.6,329.4 642.0,329.4 641.4,330.3 640.8,328.1 640.2,329.0 639.6,328.3 639.0,328.4 638.4,329.9 637.8,330.5 637.2,330.1 636.6,329.4 636.0,329.8 635.4,329.3 634.8,328.5 634.2,327.9 633.6,328.9 633.0,328.9 632.4,330.2 631.8,327.7 631.2,329.6 630.6,331.1 630.0,328.0 629.4,330.1 628.8,329.4 628.2,330.0 627.6,329.9 627.0,327.9 626.4,329.4 625.8,328.9 625.2,328.3 624.6,328.0 624.0,327.8 623.4,329.1 622.8,328.1 622.2,326.8 621.6,329.2 621.0,327.7 620.4,327.5 619.8,328.6 619.2,327.8 618.6,327.4 618.0,326.8 617.4,327.2 616.8,328.1 616.2,326.3 615.6,326.6 615.0,328.5 614.4,328.1 613.8,326.6 613.2,326.6 612.6,328.7 612.0,326.0 611.4,328.3 610.8,327.7 610.2,325.8 609.6,327.7 609.0,326.4 608.4,327.2 607.8,328.5 607.2,327.6 606.6,327.2 606.0,327.8 605.4,328.5 604.8,327.5 604.2,327.5 603.6,327.1 603.0,326.7 602.4,325.9 601.8,326.8 601.2,326.2 600.6,328.0 600.0,327.1 599.4,327.5 598.8,326.1 598.2,326.8 597.6,326.3 597.0,327.4 596.4,328.6 595.8,328.3 595.2,328.9 594.6,327.4 594.0,328.3 593.4,327.3 592.8,328.9 592.2,328.1 591.6,328.0 591.0,328.5 590.4,326.4 589.8,328.2 589.2,326.8 588.6,328.3 588.0,328.5 587.4,327.6 586.8,327.4 586.2,326.7 585.6,326.6 585.0,327.4 584.4,329.4 583.8,329.4 583.2,328.9 582.6,327.4 582.0,327.1 581.4,329.5 580.8,328.6 580.2,329.1 579.6,328.6 579.0,327.7 578.4,328.5 577.8,329.1 577.2,327.8 576.6,327.4 576.0,328.1 575.4,327.7 574.8,327.7 574.2,326.8 573.6,326.6 573.0,327.4 572.4,326.7 571.8,329.0 571.2,327.9 570.6,326.2 570.0,327.0 569.4,327.5 568.8,326.2 568.2,327.5 567.6,327.0 567.0,326.4 566.4,326.3 565.8,326.6 565.2,325.9 564.6,326.9 564.0,326.2 563.4,327.7 562.8,327.3 562.2,326.6 561.6,328.8 561.0,327.3 560.4,326.3 559.8,325.8 559.2,325.7 558.6,327.5 558.0,325.2 557.4,327.7 556.8,326.0 556.2,326.6 555.6,326.3 555.0,327.8 554.4,325.4 553.8,326.7 553.2,327.6 552.6,326.4 552.0,326.3 551.4,326.0 550.8,326.9 550.2,325.1 549.6,327.4 549.0,324.8 548.4,326.7 547.8,325.2 547.2,327.3 546.6,327.6 546.0,327.4 545.4,326.5 544.8,328.7 544.2,327.6 543.6,327.1 543.0,327.2 542.4,326.9 541.8,325.9 541.2,325.2 540.6,326.1 540.0,325.5 539.4,325.1 538.8,327.0 538.2,327.7 537.6,325.9 537.0,327.0 536.4,327.4 535.8,325.5 535.2,328.0 534.6,326.9 534.0,328.5 533.4,326.5 532.8,325.7 532.2,327.5 531.6,325.5 531.0,325.6 530.4,326.6 529.8,326.8 529.2,326.4 528.6,326.0 528.0,328.3 527.4,326.6 526.8,325.9 526.2,326.5 525.6,326.8 525.0,330.1 524.4,326.7 523.8,327.6 523.2,327.4 522.6,327.0 522.0,327.4 521.4,326.9 520.8,326.3 520.2,326.7 519.6,327.4 519.0,327.7 518.4,325.7 517.8,328.2 517.2,326.9 516.6,327.4 516.0,328.0 515.4,327.8 514.8,327.7 514.2,325.6 513.6,325.1 513.0,327.1 512.4,326.1 511.8,326.4 511.2,326.8 510.6,324.9 510.0,327.4 509.4,326.4 508.8,324.7 508.2,328.4 507.6,327.0 507.0,327.0 506.4,324.5 505.8,325.1 505.2,326.9 504.6,325.5 504.0,328.2 503.4,324.4 502.8,325.2 502.2,326.8 501.6,326.6 501.0,326.2 500.4,324.8 499.8,324.9 499.2,325.5 498.6,325.4 498.0,325.9 497.4,326.7 496.8,324.9 496.2,326.1 495.6,325.4 495.0,326.5 494.4,326.2 493.8,324.7 493.2,324.0 492.6,326.4 492.0,323.8 491.4,326.6 490.8,326.0 490.2,323.7 489.6,326.1 489,325.6" fill="#f6f03c"/>
<polygon points="674.6,339.4 675.2,335.8 675.8,327.5 676.4,335.6 677.0,339.2 677.6,337.7 678.2,339.1 678.8,328.4 679.4,336.9 680.0,335.7 680.6,339.0 681.2,338.5 681.8,338.4 682.4,336.1 683.0,338.7 683.6,336.1 684.2,334.9 684.8,335.5 685.4,334.9 686.0,337.1 686.6,338.2 687.2,336.4 687.8,336.1 688.4,334.5 689.0,335.9 689.6,337.4 690.2,334.4 690.8,335.8 691.4,334.7 692.0,334.7 692.6,333.7 693.2,332.9 693.8,333.0 694.4,336.0 695.0,328.9 695.6,333.8 696.2,332.2 696.8,327.6 697.4,333.0 698.0,333.8 698.6,333.7 699.2,331.0 699.8,333.1 700.4,329.3 701.0,332.1 701.6,331.7 702.2,330.8 702.8,327.9 703.4,329.6 704.0,329.0 704.6,328.3 705.2,328.2 705.8,326.6 706.4,326.2 707.0,327.4 707.6,324.1 708.2,333.8 708.8,330.8 709.4,338.3 710.0,342.8 710.6,343.5 711.2,333.4 711.8,342.7 712.4,340.6 713.0,342.2 713.6,341.9 714.2,340.9 714.8,341.6 715.4,332.6 716.0,341.2 716.6,341.6 717.2,340.4 717.8,339.6 718.4,340.9 719.0,339.7 719.6,338.9 720.2,336.6 720.8,339.4 721.4,339.5 722.0,339.4 722.6,337.5 723.2,337.1 723.8,339.1 724.4,337.6 725.0,335.3 725.6,337.8 726.2,331.9 726.8,338.0 727.4,336.1 728.0,337.8 728.6,338.2 729.2,337.0 729.8,334.0 730.4,335.6 731.0,336.1 731.6,333.5 732.2,334.3 732.8,335.6 733.4,335.1 734.0,330.9 734.6,333.6 735.2,329.8 735.8,331.9 736.4,324.7 737.0,323.6 737.6,317.2 738.2,306.3 738.8,283.6 739.4,268.9 740.0,294.1 740.6,309.1 741.2,319.6 741.8,324.0 742.4,328.3 743.0,330.2 743.6,332.2 744.2,332.9 744.8,331.3 745.4,334.2 746.0,331.9 746.6,324.2 747.2,330.2 747.8,330.8 748.4,332.6 749.0,331.1 749.6,325.9 750.2,331.7 750.8,330.1 751.4,330.6 752.0,329.6 752.6,329.8 753.2,331.3 753.8,331.7 754.4,332.5 755.0,333.4 755.6,330.4 756.2,332.4 756.8,331.3 757.4,330.4 758.0,330.9 758.6,331.3 759.2,332.1 759.8,330.0 760.4,334.1 761.0,331.8 761.6,333.7 762.2,333.8 762.8,334.5 763.4,333.5 764.0,334.3 764.6,332.1 765.2,332.3 765.8,333.3 766.4,333.6 767.0,331.8 767.6,334.3 768.2,335.0 768.8,336.2 769.4,332.8 770.0,334.6 770.6,333.7 771.2,333.0 771.8,334.7 772.4,336.4 773.0,335.8 773.6,335.7 774.2,337.6 774.8,334.5 775.4,330.5 776.0,334.4 776.6,336.4 777.2,337.3 777.8,338.6 778.4,336.1 779.0,335.4 779.6,333.8 780.2,335.8 780.8,335.9 781.4,338.8 782.0,337.4 782.6,336.0 783.2,338.1 783.8,336.5 784.4,338.2 785.0,336.5 785.6,340.8 786.2,337.1 786.8,340.2 787.4,338.8 788.0,340.7 788.6,341.7 789.2,338.8 789.8,341.2 790.4,339.0 791.0,340.1 791.6,338.6 792.2,340.3 792.8,339.8 793.4,340.9 794.0,340.7 794.6,341.4 795.2,341.3 795.8,343.3 796.4,333.9 797.0,342.3 797.6,342.9 798.2,340.0 798.8,343.9 799.4,340.3 800.0,341.6 800.6,343.4 801.2,343.8 801.8,341.4 802.4,344.4 803.0,345.1 803.6,345.6 804.2,343.1 804.8,343.8 805.4,345.8 806.0,346.3 806.6,345.0 807.2,344.8 807.8,343.7 808.4,345.4 809.0,343.7 809.0,384.1 808.4,393.6 807.8,384.0 807.2,383.3 806.6,387.2 806.0,380.0 805.4,386.3 804.8,382.8 804.2,384.0 803.6,382.8 803.0,397.3 802.4,381.1 801.8,384.7 801.2,381.6 800.6,382.6 800.0,381.5 799.4,391.7 798.8,384.4 798.2,382.8 797.6,400.2 797.0,382.4 796.4,384.3 795.8,384.3 795.2,380.4 794.6,382.2 794.0,386.1 793.4,384.7 792.8,392.2 792.2,382.7 791.6,381.1 791.0,384.5 790.4,385.5 789.8,387.4 789.2,382.2 788.6,382.9 788.0,382.2 787.4,384.3 786.8,383.9 786.2,380.3 785.6,382.6 785.0,381.7 784.4,384.3 783.8,386.8 783.2,382.2 782.6,381.8 782.0,386.6 781.4,383.1 780.8,380.9 780.2,381.9 779.6,384.0 779.0,380.8 778.4,395.0 777.8,380.3 777.2,380.6 776.6,384.8 776.0,380.3 775.4,387.5 774.8,383.8 774.2,380.8 773.6,387.9 773.0,381.2 772.4,386.2 771.8,383.1 771.2,380.2 770.6,380.6 770.0,382.1 769.4,383.7 768.8,387.4 768.2,380.7 767.6,380.6 767.0,383.7 766.4,385.5 765.8,380.8 765.2,384.9 764.6,387.1 764.0,381.3 763.4,385.2 762.8,380.9 762.2,387.4 761.6,384.4 761.0,382.1 760.4,383.5 759.8,389.1 759.2,385.2 758.6,385.0 758.0,381.5 757.4,386.2 756.8,381.1 756.2,383.3 755.6,378.7 755.0,378.7 754.4,385.9 753.8,378.4 753.2,389.1 752.6,378.8 752.0,382.5 751.4,377.7 750.8,378.7 750.2,383.0 749.6,383.9 749.0,377.3 748.4,379.8 747.8,381.4 747.2,376.6 746.6,380.9 746.0,376.5 745.4,380.6 744.8,376.6 744.2,375.7 743.6,376.5 743.0,373.7 742.4,376.6 741.8,373.3 741.2,371.4 740.6,370.9 740.0,369.6 739.4,369.9 738.8,368.8 738.2,374.7 737.6,369.6 737.0,375.0 736.4,375.4 735.8,371.0 735.2,367.6 734.6,376.0 734.0,378.6 733.4,382.0 732.8,378.4 732.2,383.8 731.6,385.7 731.0,386.9 730.4,383.5 729.8,384.6 729.2,387.1 728.6,384.7 728.0,380.8 727.4,383.2 726.8,385.1 726.2,392.0 725.6,381.6 725.0,383.8 724.4,381.5 723.8,383.6 723.2,386.2 722.6,382.8 722.0,383.1 721.4,381.4 720.8,381.4 720.2,381.7 719.6,380.2 719.0,387.5 718.4,383.0 717.8,386.7 717.2,380.8 716.6,381.4 716.0,393.9 715.4,387.6 714.8,380.7 714.2,387.8 713.6,385.4 713.0,387.3 712.4,383.7 711.8,386.1 711.2,382.3 710.6,393.3 710.0,381.6 709.4,379.7 708.8,383.6 708.2,388.3 707.6,386.1 707.0,375.8 706.4,370.4 705.8,367.2 705.2,367.8 704.6,374.1 704.0,373.3 703.4,373.6 702.8,368.5 702.2,380.4 701.6,369.3 701.0,374.3 700.4,368.3 699.8,368.6 699.2,371.4 698.6,369.7 698.0,371.7 697.4,368.7 696.8,369.3 696.2,371.2 695.6,367.8 695.0,373.2 694.4,380.6 693.8,374.9 693.2,370.6 692.6,370.4 692.0,370.1 691.4,367.7 690.8,367.7 690.2,372.0 689.6,370.5 689.0,369.4 688.4,367.3 687.8,374.0 687.2,379.7 686.6,370.7 686.0,379.6 685.4,374.2 684.8,371.3 684.2,374.8 683.6,383.8 683.0,373.1 682.4,368.8 681.8,373.6 681.2,367.2 680.6,372.8 680.0,373.5 679.4,370.5 678.8,369.0 678.2,374.3 677.6,369.8 677.0,368.7 676.4,371.2 675.8,379.4 675.2,372.4 674.6,373.4" fill="#f6f03c"/>
<line x1="739.3" y1="270" x2="739.3" y2="340" stroke="#f6f03c" stroke-width="1.0"/>
<line x1="737.7" y1="292" x2="737.7" y2="340" stroke="#f6f03c" stroke-width="0.8"/>
<line x1="708.3" y1="314" x2="708.3" y2="345" stroke="#f6f03c" stroke-width="0.9"/>
<line x1="757.5" y1="319" x2="757.5" y2="345" stroke="#f6f03c" stroke-width="0.8"/>
<line x1="706.2" y1="325" x2="706.2" y2="345" stroke="#f6f03c" stroke-width="0.8"/>
<line x1="741" y1="305" x2="741" y2="345" stroke="#f6f03c" stroke-width="1.0"/>
<line x1="753" y1="326" x2="753" y2="345" stroke="#f6f03c" stroke-width="0.8"/>
<line x1="704" y1="327" x2="704" y2="345" stroke="#f6f03c" stroke-width="0.7"/>
<line x1="678" y1="371" x2="678" y2="392" stroke="#f6f03c" stroke-width="0.7"/>
<line x1="713.5" y1="384" x2="713.5" y2="400" stroke="#f6f03c" stroke-width="0.7"/>
<line x1="753.8" y1="380" x2="753.8" y2="396" stroke="#f6f03c" stroke-width="0.7"/>
<line x1="786" y1="384" x2="786" y2="399" stroke="#f6f03c" stroke-width="0.7"/>
<line x1="740.6" y1="332" x2="740.6" y2="372" stroke="#2e2c00" stroke-width="0.8" opacity="0.6"/>
<line x1="707" y1="350" x2="707" y2="376" stroke="#8a8620" stroke-width="0.6" opacity="0.6"/>
<path d="M673.8 332.3 l3 3.2 l-3 3.2 l-3 -3.2 z" fill="#ffffff"/>
<text x="670.8" y="331" font-size="4.33" fill="#f4f4f4" stroke="#f4f4f4" stroke-width="0.13" textLength="5.8" lengthAdjust="spacingAndGlyphs" opacity="0.99" >MR</text>
<path d="M598 408.4 l1.2 2.4 l1.2 -2.4" stroke="#d03030" stroke-width="0.7" fill="none"/>
<text x="493.8" y="268.7" font-size="5.1" fill="#f4f4f4" stroke="#f4f4f4" stroke-width="0.13" textLength="35" lengthAdjust="spacingAndGlyphs" opacity="0.99" >MR: -32.68 dBm</text>
<text x="493.8" y="274.2" font-size="5.1" fill="#f4f4f4" stroke="#f4f4f4" stroke-width="0.13" textLength="23.5" lengthAdjust="spacingAndGlyphs" opacity="0.99" >122.321 us</text>
<path d="M466.4 250.4 l2 2.2 l2 -2.2" stroke="#6a6a70" stroke-width="1.2" fill="none"/>
<text x="474" y="253.9" font-size="5.45" fill="#1e1e1e" stroke="#1e1e1e" stroke-width="0.13" textLength="17.5" lengthAdjust="spacingAndGlyphs" >Trace 1</text>
<rect x="513" y="248.9" width="5.6" height="5.8" fill="#f4f9fd" stroke="#6faedb" stroke-width="0.8" rx="0.6"/><path d="M514.2 251.9 l1.3 1.4 l2.1 -2.9" stroke="#2f7fc0" stroke-width="0.9" fill="none"/>
<text x="520.6" y="254.2" font-size="5.45" fill="#1e1e1e" stroke="#1e1e1e" stroke-width="0.13" textLength="13.5" lengthAdjust="spacingAndGlyphs" >Show</text>
<text x="538.5" y="254.2" font-size="5.19" fill="#1e1e1e" stroke="#1e1e1e" stroke-width="0.13" textLength="33.5" lengthAdjust="spacingAndGlyphs" >+Peak Normal</text>
<rect x="818.5" y="247.3" width="18.1" height="8.6" fill="url(#gBtn)" stroke="#6faedb" stroke-width="0.8" rx="0.8"/><text x="827.55" y="253.48" font-size="5.36" fill="#1e1e1e" stroke="#1e1e1e" stroke-width="0.13" text-anchor="middle" textLength="12.5" lengthAdjust="spacingAndGlyphs">Clear</text>
<path d="M424.9 266.7 L426.6 264.7 L428.3 266.7 Z" fill="#6b6478"/><path d="M425.1 266.8 H428.1 L426.6 268.3 Z" fill="#4a4a52"/>
<text x="430" y="263.6" font-size="5.45" fill="#1e1e1e" stroke="#1e1e1e" stroke-width="0.13" textLength="16.5" lengthAdjust="spacingAndGlyphs" >dB/div:</text>
<text x="431.8" y="271" font-size="5.45" fill="#1e1e1e" stroke="#1e1e1e" stroke-width="0.13" textLength="19" lengthAdjust="spacingAndGlyphs" >4.00 dB</text>
<path d="M424.9 283.7 L426.6 281.7 L428.3 283.7 Z" fill="#6b6478"/><path d="M425.1 283.8 H428.1 L426.6 285.3 Z" fill="#4a4a52"/>
<text x="430" y="281" font-size="5.45" fill="#1e1e1e" stroke="#1e1e1e" stroke-width="0.13" textLength="24" lengthAdjust="spacingAndGlyphs" >Meas BW:</text>
<text x="431.8" y="288.4" font-size="5.45" fill="#1e1e1e" stroke="#1e1e1e" stroke-width="0.13" textLength="25.5" lengthAdjust="spacingAndGlyphs" >2.000 GHz</text>
<rect x="425.4" y="403.6" width="31.4" height="8.4" fill="url(#gBtn)" stroke="#6faedb" stroke-width="0.8" rx="0.8"/><text x="441.09999999999997" y="409.68" font-size="5.36" fill="#1e1e1e" stroke="#1e1e1e" stroke-width="0.13" text-anchor="middle" textLength="24" lengthAdjust="spacingAndGlyphs">Autoscale</text>
<text x="422.6" y="418" font-size="4.84" fill="#1e1e1e" stroke="#1e1e1e" stroke-width="0.13" textLength="7.5" lengthAdjust="spacingAndGlyphs" >RMS:</text>
<text x="437" y="418" font-size="4.84" fill="#1e1e1e" stroke="#1e1e1e" stroke-width="0.13" textLength="23" lengthAdjust="spacingAndGlyphs" >-29.38 dBm</text>
<text x="425.5" y="425.4" font-size="4.84" fill="#1e1e1e" stroke="#1e1e1e" stroke-width="0.13" textLength="9.5" lengthAdjust="spacingAndGlyphs" >Max:</text>
<text x="442" y="425.4" font-size="4.84" fill="#1e1e1e" stroke="#1e1e1e" stroke-width="0.13" textLength="23.5" lengthAdjust="spacingAndGlyphs" >-14.12 dBm</text>
<text x="479" y="425.4" font-size="3.98" fill="#1e1e1e" stroke="#1e1e1e" stroke-width="0.13" >@</text>
<text x="485.6" y="425.4" font-size="4.84" fill="#1e1e1e" stroke="#1e1e1e" stroke-width="0.13" textLength="18" lengthAdjust="spacingAndGlyphs" >160.0 us</text>
<text x="512" y="425.4" font-size="4.84" fill="#1e1e1e" stroke="#1e1e1e" stroke-width="0.13" textLength="7.7" lengthAdjust="spacingAndGlyphs" >Min:</text>
<text x="527.8" y="425.4" font-size="4.84" fill="#1e1e1e" stroke="#1e1e1e" stroke-width="0.13" textLength="23.6" lengthAdjust="spacingAndGlyphs" >-48.92 dBm</text>
<text x="565" y="425.4" font-size="3.98" fill="#1e1e1e" stroke="#1e1e1e" stroke-width="0.13" >@</text>
<text x="572" y="425.4" font-size="4.84" fill="#1e1e1e" stroke="#1e1e1e" stroke-width="0.13" textLength="18" lengthAdjust="spacingAndGlyphs" >144.4 us</text>
<path d="M489.7 416.4 L491.4 414.4 L493.1 416.4 Z" fill="#6b6478"/><path d="M489.9 416.5 H492.9 L491.4 418.0 Z" fill="#4a4a52"/>
<text x="497" y="418.4" font-size="5.28" fill="#1e1e1e" stroke="#1e1e1e" stroke-width="0.13" textLength="19.5" lengthAdjust="spacingAndGlyphs" >Position:</text>
<text x="520.7" y="418.4" font-size="5.28" fill="#1e1e1e" stroke="#1e1e1e" stroke-width="0.13" textLength="23.6" lengthAdjust="spacingAndGlyphs" >15.997 us</text>
<path d="M775.3 416.4 L777 414.4 L778.7 416.4 Z" fill="#6b6478"/><path d="M775.5 416.5 H778.5 L777 418.0 Z" fill="#4a4a52"/>
<text x="782.6" y="418.4" font-size="5.28" fill="#1e1e1e" stroke="#1e1e1e" stroke-width="0.13" textLength="13" lengthAdjust="spacingAndGlyphs" >Scale:</text>
<text x="802.5" y="418.4" font-size="5.28" fill="#1e1e1e" stroke="#1e1e1e" stroke-width="0.13" textLength="27" lengthAdjust="spacingAndGlyphs" >199.964 us</text>
<line x1="0" y1="430.3" x2="840" y2="430.3" stroke="#86b6d8" stroke-width="1.3" />
<line x1="0" y1="445.7" x2="840" y2="445.7" stroke="#86b6d8" stroke-width="1.2" />
<line x1="0" y1="460.7" x2="840" y2="460.7" stroke="#86b6d8" stroke-width="1.2" />
<text x="-0.5" y="441.3" font-size="6.92" fill="#2a2a2a" stroke="#2a2a2a" stroke-width="0.13" textLength="23" lengthAdjust="spacingAndGlyphs" >Markers</text>
<rect x="48.3" y="432.9" width="10.1" height="10.7" fill="#fbfbfb" stroke="#c4c4cc" stroke-width="0.7"/>
<path d="M51.2 437 l2.2 2.4 l2.2 -2.4" stroke="#777" stroke-width="1" fill="none"/>
<text x="61.8" y="441.3" font-size="6.57" fill="#2a2a2a" stroke="#2a2a2a" stroke-width="0.13" textLength="9.6" lengthAdjust="spacingAndGlyphs" >MR</text>
<rect x="328.6" y="433" width="34.4" height="10.2" fill="url(#gBtn)" stroke="#c5d8e6" stroke-width="0.8" rx="0.8"/><text x="345.8" y="440.34" font-size="6.4" fill="#b5c3cf" stroke="#b5c3cf" stroke-width="0.13" text-anchor="middle" textLength="28.5" lengthAdjust="spacingAndGlyphs">To Center</text>
<rect x="368.4" y="433" width="20.4" height="10.2" fill="url(#gBtn)" stroke="#6faedb" stroke-width="0.8" rx="0.8"/><text x="378.59999999999997" y="440.34" font-size="6.4" fill="#2a2a2a" stroke="#2a2a2a" stroke-width="0.13" text-anchor="middle" textLength="14" lengthAdjust="spacingAndGlyphs">Peak</text>
<rect x="392.2" y="433" width="11.8" height="10.2" fill="url(#gBtn)" stroke="#6faedb" stroke-width="0.8" rx="0.8"/><path d="M-4.3 0 L-0.6 -3.6 V-1.7 H3.8 V1.7 H-0.6 V3.6 Z" transform="translate(398.09999999999997 438.1) rotate(0)" fill="#fff" stroke="#333" stroke-width="0.75" stroke-linejoin="round"/>
<rect x="408.2" y="433" width="11.8" height="10.2" fill="url(#gBtn)" stroke="#6faedb" stroke-width="0.8" rx="0.8"/><path d="M-4.3 0 L-0.6 -3.6 V-1.7 H3.8 V1.7 H-0.6 V3.6 Z" transform="translate(414.09999999999997 438.1) rotate(180)" fill="#fff" stroke="#333" stroke-width="0.75" stroke-linejoin="round"/>
<rect x="424.2" y="433" width="11.8" height="10.2" fill="url(#gBtn)" stroke="#6faedb" stroke-width="0.8" rx="0.8"/><path d="M-4.3 0 L-0.6 -3.6 V-1.7 H3.8 V1.7 H-0.6 V3.6 Z" transform="translate(430.09999999999997 438.1) rotate(270)" fill="#fff" stroke="#333" stroke-width="0.75" stroke-linejoin="round"/>
<rect x="440.2" y="433" width="11.8" height="10.2" fill="url(#gBtn)" stroke="#6faedb" stroke-width="0.8" rx="0.8"/><path d="M-4.3 0 L-0.6 -3.6 V-1.7 H3.8 V1.7 H-0.6 V3.6 Z" transform="translate(446.09999999999997 438.1) rotate(90)" fill="#fff" stroke="#333" stroke-width="0.75" stroke-linejoin="round"/>
<rect x="568.6" y="433.2" width="50.4" height="9.8" fill="#fff" stroke="#c6c6c6" stroke-width="0.7"/>
<text x="571" y="441.3" font-size="6.57" fill="#2a2a2a" stroke="#2a2a2a" stroke-width="0.13" textLength="15" lengthAdjust="spacingAndGlyphs" >Time</text>
<rect x="611.4" y="434" width="6.4" height="8.2" fill="#dceefa" stroke="#5b9bd5" stroke-width="0.7" rx="0.8"/>
<path d="M613 437.6 l1.6 1.6 l1.6 -1.6" stroke="#2f7fc0" stroke-width="0.8" fill="none"/>
<rect x="620.6" y="433.2" width="61" height="9.8" fill="#fff" stroke="#c6c6c6" stroke-width="0.7"/>
<text x="622.4" y="441.3" font-size="6.57" fill="#2a2a2a" stroke="#2a2a2a" stroke-width="0.13" textLength="32" lengthAdjust="spacingAndGlyphs" >122.321 us</text>
<rect x="776.2" y="433" width="22.2" height="10.2" fill="url(#gBtn)" stroke="#6faedb" stroke-width="0.8" rx="0.8"/><text x="787.3000000000001" y="440.34" font-size="6.4" fill="#2a2a2a" stroke="#2a2a2a" stroke-width="0.13" text-anchor="middle" textLength="15.5" lengthAdjust="spacingAndGlyphs">Table</text>
<rect x="801.4" y="433" width="23" height="10.2" fill="url(#gBtn)" stroke="#6faedb" stroke-width="0.8" rx="0.8"/><text x="812.9" y="440.34" font-size="6.4" fill="#2a2a2a" stroke="#2a2a2a" stroke-width="0.13" text-anchor="middle" textLength="18.5" lengthAdjust="spacingAndGlyphs">Define</text>
<rect x="827.4" y="433" width="12.6" height="10.2" fill="url(#gBtn)" stroke="#6faedb" stroke-width="0.8" rx="0.8"/>
<path d="M830.6 435.4 l5.4 5.6 M836 435.4 l-5.4 5.6" stroke="#111" stroke-width="1.3" fill="none"/>
<text x="-2.5" y="455.6" font-size="6.57" fill="#2a2a2a" stroke="#2a2a2a" stroke-width="0.13" textLength="40.5" lengthAdjust="spacingAndGlyphs" >Amp Vs Time</text>
<text x="48.2" y="455.6" font-size="6.57" fill="#2a2a2a" stroke="#2a2a2a" stroke-width="0.13" textLength="30" lengthAdjust="spacingAndGlyphs" >Frequency</text>
<rect x="80.6" y="447.9" width="41.4" height="9.8" fill="#fff" stroke="#c6c6c6" stroke-width="0.7"/>
<text x="83" y="455.6" font-size="6.57" fill="#2a2a2a" stroke="#2a2a2a" stroke-width="0.13" textLength="37" lengthAdjust="spacingAndGlyphs" >2.00000 GHz</text>
<text x="268" y="455.6" font-size="6.57" fill="#2a2a2a" stroke="#2a2a2a" stroke-width="0.13" textLength="22" lengthAdjust="spacingAndGlyphs" >Ref Lev</text>
<rect x="292.4" y="447.9" width="41.4" height="9.8" fill="#fff" stroke="#c6c6c6" stroke-width="0.7"/>
<text x="294.6" y="455.6" font-size="6.57" fill="#2a2a2a" stroke="#2a2a2a" stroke-width="0.13" textLength="28.5" lengthAdjust="spacingAndGlyphs" >0.00 dBm</text>
<text x="474.6" y="455.6" font-size="6.57" fill="#2a2a2a" stroke="#2a2a2a" stroke-width="0.13" textLength="27.5" lengthAdjust="spacingAndGlyphs" >Meas BW</text>
<rect x="504.6" y="447.9" width="41.4" height="9.8" fill="#fff" stroke="#c6c6c6" stroke-width="0.7"/>
<text x="507" y="455.6" font-size="6.57" fill="#2a2a2a" stroke="#2a2a2a" stroke-width="0.13" textLength="30" lengthAdjust="spacingAndGlyphs" >2.000 GHz</text>
<rect x="774.4" y="447.9" width="26" height="10.2" fill="url(#gBtn)" stroke="#6faedb" stroke-width="0.8" rx="0.8"/><text x="787.4" y="455.24" font-size="6.4" fill="#2a2a2a" stroke="#2a2a2a" stroke-width="0.13" text-anchor="middle" textLength="22" lengthAdjust="spacingAndGlyphs">Markers</text>
<rect x="803" y="447.9" width="22.4" height="10.2" fill="url(#gBtn)" stroke="#6faedb" stroke-width="0.8" rx="0.8"/><text x="814.2" y="455.24" font-size="6.4" fill="#2a2a2a" stroke="#2a2a2a" stroke-width="0.13" text-anchor="middle" textLength="18.5" lengthAdjust="spacingAndGlyphs">Traces</text>
<rect x="827.6" y="447.9" width="12.6" height="10.4" fill="url(#gBtn)" stroke="#6faedb" stroke-width="0.8" rx="0.8"/>
<path d="M838.73 452.3 L838.73 453.9 L837.71 454.02 L837.24 455.15 L837.89 455.95 L836.75 457.09 L835.95 456.44 L834.82 456.91 L834.7 457.93 L833.1 457.93 L832.98 456.91 L831.85 456.44 L831.05 457.09 L829.91 455.95 L830.56 455.15 L830.09 454.02 L829.07 453.9 L829.07 452.3 L830.09 452.18 L830.56 451.05 L829.91 450.25 L831.05 449.11 L831.85 449.76 L832.98 449.29 L833.1 448.27 L834.7 448.27 L834.82 449.29 L835.95 449.76 L836.75 449.11 L837.89 450.25 L837.24 451.05 L837.71 452.18 Z" fill="#111" stroke="#111" stroke-width="0.5" stroke-linejoin="round"/><circle cx="833.9" cy="453.1" r="2.06" fill="#fff"/>
<text x="1.5" y="469.3" font-size="5.62" fill="#2a2a2a" stroke="#2a2a2a" stroke-width="0.13" textLength="21" lengthAdjust="spacingAndGlyphs" >Stopped</text>
<text x="42" y="469.3" font-size="5.62" fill="#2a2a2a" stroke="#2a2a2a" stroke-width="0.13" textLength="92" lengthAdjust="spacingAndGlyphs" >Not enough samples for current setup</text>
<line x1="39.8" y1="462" x2="39.8" y2="467" stroke="#cfcfcf" stroke-width="0.8"/>
<line x1="163.3" y1="462" x2="163.3" y2="467" stroke="#cfcfcf" stroke-width="0.8"/>
<line x1="192.7" y1="462" x2="192.7" y2="467" stroke="#cfcfcf" stroke-width="0.8"/>
<line x1="239.3" y1="462" x2="239.3" y2="467" stroke="#cfcfcf" stroke-width="0.8"/>
<line x1="270" y1="462" x2="270" y2="467" stroke="#cfcfcf" stroke-width="0.8"/>
<line x1="305" y1="462" x2="305" y2="467" stroke="#cfcfcf" stroke-width="0.8"/>
<line x1="340.7" y1="462" x2="340.7" y2="467" stroke="#cfcfcf" stroke-width="0.8"/>
<line x1="364" y1="462" x2="364" y2="467" stroke="#cfcfcf" stroke-width="0.8"/>
<path d="M831.5 467 l3.6 -3.4 l1 1.6 z" fill="#d02020"/>
</svg>
</body></html>
